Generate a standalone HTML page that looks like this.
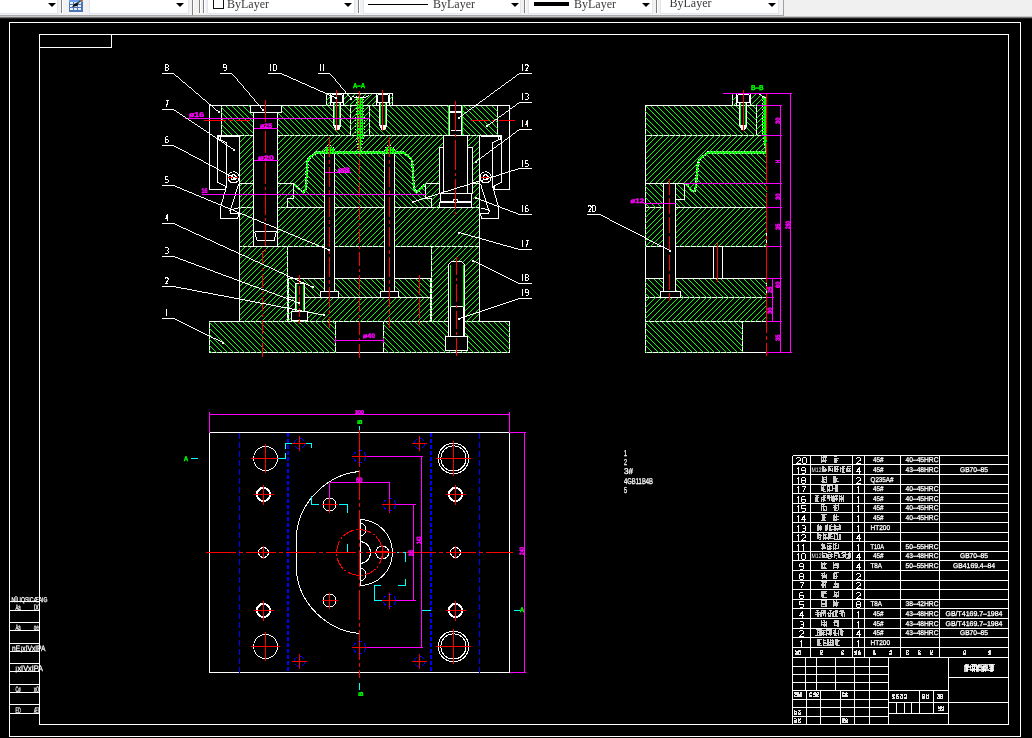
<!DOCTYPE html>
<html><head><meta charset="utf-8"><title>drawing</title>
<style>
html,body{margin:0;padding:0;background:#000;}
body{width:1032px;height:738px;overflow:hidden;position:relative;font-family:"Liberation Sans",sans-serif;}
#tb{position:absolute;left:0;top:0;width:1032px;height:19px;background:linear-gradient(#f0f0f0 0,#f0f0f0 16px,#a0a0a0 17px,#404040 18px,#000 19px);overflow:hidden}
#tb .bar{position:absolute;left:0;top:0;width:783px;height:15px;background:#f2f2f2;border-right:1px solid #a0a0a0;border-bottom:1px solid #a8a8a8}
#tb .cb{position:absolute;top:-3px;height:17px;background:#fff;border:1px solid #dfe6f2;box-sizing:border-box}
#tb .ar{position:absolute;top:3px;width:0;height:0;border-left:4px solid transparent;border-right:4px solid transparent;border-top:4px solid #000}
#tb .sep{position:absolute;top:0;width:1px;height:13px;background:#808080;box-shadow:1px 0 0 #fff}
#tb .chk{position:absolute;top:-3px;width:9px;height:10px;border:1px solid #111;background:#fff}
#tb .t{position:absolute;font-family:"Liberation Serif",serif;font-size:12px;color:#3a3a3a;letter-spacing:0;line-height:14px}
svg#dw{position:absolute;left:0;top:0;will-change:transform}
#tb{will-change:transform}
</style></head>
<body>
<svg id="dw" width="1032" height="738" viewBox="0 0 1032 738" shape-rendering="crispEdges" text-rendering="geometricPrecision">
<rect x="0" y="0" width="1032" height="738" fill="#000"/>
<defs>
<pattern id="gd" width="3" height="3" patternUnits="userSpaceOnUse"><rect width="3" height="3" fill="#00ff00"/><rect x="1" y="1" width="1" height="1" fill="#000"/></pattern>
<mask id="c1" maskUnits="userSpaceOnUse" x="0" y="0" width="1032" height="738"><path d="M209.5,321.5 L335.5,321.5 L335.5,352.5 L209.5,352.5Z" fill-rule="evenodd" fill="#fff" stroke="#fff" stroke-width="1.2"/></mask>
<mask id="c2" maskUnits="userSpaceOnUse" x="0" y="0" width="1032" height="738"><path d="M383.5,321.5 L509.5,321.5 L509.5,352.5 L383.5,352.5Z" fill-rule="evenodd" fill="#fff" stroke="#fff" stroke-width="1.2"/></mask>
<mask id="c3" maskUnits="userSpaceOnUse" x="0" y="0" width="1032" height="738"><path d="M239.5,246.5 L287.5,246.5 L287.5,321.5 L239.5,321.5Z" fill-rule="evenodd" fill="#fff" stroke="#fff" stroke-width="1.2"/></mask>
<mask id="c4" maskUnits="userSpaceOnUse" x="0" y="0" width="1032" height="738"><path d="M431.5,246.5 L479.5,246.5 L479.5,321.5 L431.5,321.5Z" fill-rule="evenodd" fill="#fff" stroke="#fff" stroke-width="1.2"/></mask>
<mask id="c5" maskUnits="userSpaceOnUse" x="0" y="0" width="1032" height="738"><path d="M288.5,278.5 L430.5,278.5 L430.5,297.5 L288.5,297.5Z" fill-rule="evenodd" fill="#fff" stroke="#fff" stroke-width="1.2"/></mask>
<mask id="c6" maskUnits="userSpaceOnUse" x="0" y="0" width="1032" height="738"><path d="M288.5,297.5 L430.5,297.5 L430.5,321.5 L288.5,321.5Z" fill-rule="evenodd" fill="#fff" stroke="#fff" stroke-width="1.2"/></mask>
<mask id="c7" maskUnits="userSpaceOnUse" x="0" y="0" width="1032" height="738"><path d="M239.5,207.5 L479.5,207.5 L479.5,246.5 L239.5,246.5Z" fill-rule="evenodd" fill="#fff" stroke="#fff" stroke-width="1.2"/></mask>
<mask id="c8" maskUnits="userSpaceOnUse" x="0" y="0" width="1032" height="738"><path d="M239.5,183.5 L293.5,183.5 L293.5,198.5 L287.5,198.5 L287.5,207.5 L239.5,207.5Z" fill-rule="evenodd" fill="#fff" stroke="#fff" stroke-width="1.2"/></mask>
<mask id="c9" maskUnits="userSpaceOnUse" x="0" y="0" width="1032" height="738"><path d="M425.5,183.5 L479.5,183.5 L479.5,207.5 L431.5,207.5 L431.5,198.5 L425.5,198.5Z" fill-rule="evenodd" fill="#fff" stroke="#fff" stroke-width="1.2"/></mask>
<mask id="c10" maskUnits="userSpaceOnUse" x="0" y="0" width="1032" height="738"><path d="M293.5,183.5 L293.5,198.5 L287.5,198.5 L287.5,207.5 L431.5,207.5 L431.5,198.5 L425.5,198.5 L425.5,183.5 L425,184.5 L418.2,191 L416.2,192.5 L414.7,190.5 L414,188 L412,161 L409.5,157 L402.5,152.3 L316.5,152.3 L310,157 L307.5,161 L305.8,188 L305,190.5 L303.5,192.5 L301.5,191 L294.7,184.5Z" fill-rule="evenodd" fill="#fff" stroke="#fff" stroke-width="1.2"/></mask>
<mask id="c11" maskUnits="userSpaceOnUse" x="0" y="0" width="1032" height="738"><path d="M239.5,135.5 L479.5,135.5 L479.5,183.5 L425.5,183.5 L425,184.5 L418.2,191 L416.2,192.5 L414.7,190.5 L414,188 L412,161 L409.5,157 L402.5,152.3 L316.5,152.3 L310,157 L307.5,161 L305.8,188 L305,190.5 L303.5,192.5 L301.5,191 L294.7,184.5 L293.5,183.5 L239.5,183.5Z" fill-rule="evenodd" fill="#fff" stroke="#fff" stroke-width="1.2"/></mask>
<mask id="c12" maskUnits="userSpaceOnUse" x="0" y="0" width="1032" height="738"><path d="M221.5,105.5 L497.5,105.5 L497.5,135.5 L221.5,135.5Z" fill-rule="evenodd" fill="#fff" stroke="#fff" stroke-width="1.2"/></mask>
<mask id="c13" maskUnits="userSpaceOnUse" x="0" y="0" width="1032" height="738"><path d="M326.5,93.5 L392.5,93.5 L392.5,105.5 L326.5,105.5Z" fill-rule="evenodd" fill="#fff" stroke="#fff" stroke-width="1.2"/></mask>
<mask id="c14" maskUnits="userSpaceOnUse" x="0" y="0" width="1032" height="738"><path d="M350.5,105.5 L369.5,105.5 L369.5,135.5 L350.5,135.5Z" fill-rule="evenodd" fill="#fff" stroke="#fff" stroke-width="1.2"/></mask>
<mask id="c15" maskUnits="userSpaceOnUse" x="0" y="0" width="1032" height="738"><path d="M645.5,321.5 L742.5,321.5 L742.5,352.5 L645.5,352.5Z" fill-rule="evenodd" fill="#fff" stroke="#fff" stroke-width="1.2"/></mask>
<mask id="c16" maskUnits="userSpaceOnUse" x="0" y="0" width="1032" height="738"><path d="M645.5,297.5 L766.5,297.5 L766.5,321.5 L645.5,321.5Z" fill-rule="evenodd" fill="#fff" stroke="#fff" stroke-width="1.2"/></mask>
<mask id="c17" maskUnits="userSpaceOnUse" x="0" y="0" width="1032" height="738"><path d="M645.5,278.5 L766.5,278.5 L766.5,297.5 L645.5,297.5Z" fill-rule="evenodd" fill="#fff" stroke="#fff" stroke-width="1.2"/></mask>
<mask id="c18" maskUnits="userSpaceOnUse" x="0" y="0" width="1032" height="738"><path d="M645.5,207.5 L766.5,207.5 L766.5,246.5 L645.5,246.5Z" fill-rule="evenodd" fill="#fff" stroke="#fff" stroke-width="1.2"/></mask>
<mask id="c19" maskUnits="userSpaceOnUse" x="0" y="0" width="1032" height="738"><path d="M645.5,183.5 L684.5,183.5 L684.5,199.5 L675.5,199.5 L675.5,207.5 L645.5,207.5Z" fill-rule="evenodd" fill="#fff" stroke="#fff" stroke-width="1.2"/></mask>
<mask id="c20" maskUnits="userSpaceOnUse" x="0" y="0" width="1032" height="738"><path d="M675.5,207.5 L675.5,199.5 L684.5,199.5 L684.5,183.5 L686.5,184.5 L691.5,190.5 L693.5,192 L695,190 L695.8,186 L698,162 L700.5,158 L708.5,152.3 L766.5,152.3 L766.5,207.5Z" fill-rule="evenodd" fill="#fff" stroke="#fff" stroke-width="1.2"/></mask>
<mask id="c21" maskUnits="userSpaceOnUse" x="0" y="0" width="1032" height="738"><path d="M645.5,135.5 L766.5,135.5 L766.5,152.3 L708.5,152.3 L700.5,158 L698,162 L695.8,186 L695,190 L693.5,192 L691.5,190.5 L686.5,184.5 L684.5,183.5 L645.5,183.5Z" fill-rule="evenodd" fill="#fff" stroke="#fff" stroke-width="1.2"/></mask>
<mask id="c22" maskUnits="userSpaceOnUse" x="0" y="0" width="1032" height="738"><path d="M645.5,105.5 L766.5,105.5 L766.5,135.5 L645.5,135.5Z" fill-rule="evenodd" fill="#fff" stroke="#fff" stroke-width="1.2"/></mask>
<mask id="c23" maskUnits="userSpaceOnUse" x="0" y="0" width="1032" height="738"><path d="M732.5,93.5 L758,93.5 L764,97 L766.5,97 L766.5,105.5 L732.5,105.5Z" fill-rule="evenodd" fill="#fff" stroke="#fff" stroke-width="1.2"/></mask>
<mask id="c24" maskUnits="userSpaceOnUse" x="0" y="0" width="1032" height="738"><path d="M756.5,105.5 L766.5,105.5 L766.5,135.5 L756.5,135.5Z" fill-rule="evenodd" fill="#fff" stroke="#fff" stroke-width="1.2"/></mask>
</defs>
<rect x="9.5" y="22.5" width="1011" height="714" fill="none" stroke="#ffffff" stroke-width="1"/>
<rect x="39.5" y="34.5" width="969" height="690" fill="none" stroke="#ffffff" stroke-width="1"/>
<rect x="39.5" y="34.5" width="72" height="13" fill="none" stroke="#ffffff" stroke-width="1"/>
<line x1="9.5" y1="601.5" x2="39.5" y2="601.5" stroke="#ffffff" stroke-width="1"/>
<line x1="9.5" y1="610.5" x2="39.5" y2="610.5" stroke="#ffffff" stroke-width="1"/>
<line x1="9.5" y1="622.5" x2="39.5" y2="622.5" stroke="#ffffff" stroke-width="1"/>
<line x1="9.5" y1="630.5" x2="39.5" y2="630.5" stroke="#ffffff" stroke-width="1"/>
<line x1="9.5" y1="643.5" x2="39.5" y2="643.5" stroke="#ffffff" stroke-width="1"/>
<line x1="9.5" y1="651.5" x2="39.5" y2="651.5" stroke="#ffffff" stroke-width="1"/>
<line x1="9.5" y1="663.5" x2="39.5" y2="663.5" stroke="#ffffff" stroke-width="1"/>
<line x1="9.5" y1="671.5" x2="39.5" y2="671.5" stroke="#ffffff" stroke-width="1"/>
<line x1="9.5" y1="684.5" x2="39.5" y2="684.5" stroke="#ffffff" stroke-width="1"/>
<line x1="9.5" y1="692.5" x2="39.5" y2="692.5" stroke="#ffffff" stroke-width="1"/>
<line x1="9.5" y1="704.5" x2="39.5" y2="704.5" stroke="#ffffff" stroke-width="1"/>
<line x1="9.5" y1="713.5" x2="39.5" y2="713.5" stroke="#ffffff" stroke-width="1"/>
<text x="11.5" y="601.5" font-family="Liberation Sans" font-size="7" fill="#ffffff" text-anchor="start" textLength="36" lengthAdjust="spacingAndGlyphs" stroke="#fff" stroke-width="0.25">NÏI IQSICÆAIG</text>
<text x="15.5" y="609.5" font-family="Liberation Sans" font-size="8" fill="#ffffff" text-anchor="start" textLength="5.2" lengthAdjust="spacingAndGlyphs" stroke="#fff" stroke-width="0.25">Aa</text>
<text x="33.8" y="609.5" font-family="Liberation Sans" font-size="8" fill="#ffffff" text-anchor="start" textLength="5" lengthAdjust="spacingAndGlyphs" stroke="#fff" stroke-width="0.25">IX</text>
<text x="15.5" y="629.5" font-family="Liberation Sans" font-size="8" fill="#ffffff" text-anchor="start" textLength="5.2" lengthAdjust="spacingAndGlyphs" stroke="#fff" stroke-width="0.25">Aa</text>
<text x="33.8" y="629.5" font-family="Liberation Sans" font-size="8" fill="#ffffff" text-anchor="start" textLength="5" lengthAdjust="spacingAndGlyphs" stroke="#fff" stroke-width="0.25">oe</text>
<text x="15.5" y="692" font-family="Liberation Sans" font-size="8" fill="#ffffff" text-anchor="start" textLength="5.2" lengthAdjust="spacingAndGlyphs" stroke="#fff" stroke-width="0.25">Cø</text>
<text x="33.8" y="692" font-family="Liberation Sans" font-size="8" fill="#ffffff" text-anchor="start" textLength="5" lengthAdjust="spacingAndGlyphs" stroke="#fff" stroke-width="0.25">x0</text>
<text x="15.5" y="712.5" font-family="Liberation Sans" font-size="8" fill="#ffffff" text-anchor="start" textLength="5.2" lengthAdjust="spacingAndGlyphs" stroke="#fff" stroke-width="0.25">ED</text>
<text x="33.8" y="712.5" font-family="Liberation Sans" font-size="8" fill="#ffffff" text-anchor="start" textLength="5" lengthAdjust="spacingAndGlyphs" stroke="#fff" stroke-width="0.25">Æl</text>
<text x="12" y="651" font-family="Liberation Sans" font-size="8" fill="#ffffff" text-anchor="start" textLength="33.5" lengthAdjust="spacingAndGlyphs" stroke="#fff" stroke-width="0.25">nE¡xIVxIPA</text>
<text x="15" y="671" font-family="Liberation Sans" font-size="8" fill="#ffffff" text-anchor="start" textLength="28" lengthAdjust="spacingAndGlyphs" stroke="#fff" stroke-width="0.25">¡xIVxIPA</text>
<path d="M209.5,321.5L335.5,321.5M335.5,321.5L335.5,352.5M335.5,352.5L209.5,352.5M209.5,352.5L209.5,321.5" fill="none" stroke="#ffffff" stroke-width="1" stroke-linecap="square"/>
<path d="M173.84,321.5L174.84,321.5L205.84,352.5L204.84,352.5ZM179.5,321.5L180.5,321.5L211.5,352.5L210.5,352.5ZM185.16,321.5L186.16,321.5L217.16,352.5L216.16,352.5ZM190.82,321.5L191.82,321.5L222.82,352.5L221.82,352.5ZM196.48,321.5L197.48,321.5L228.48,352.5L227.48,352.5ZM202.14,321.5L203.14,321.5L234.14,352.5L233.14,352.5ZM207.8,321.5L208.8,321.5L239.8,352.5L238.8,352.5ZM213.46,321.5L214.46,321.5L245.46,352.5L244.46,352.5ZM219.12,321.5L220.12,321.5L251.12,352.5L250.12,352.5ZM224.78,321.5L225.78,321.5L256.78,352.5L255.78,352.5ZM230.44,321.5L231.44,321.5L262.44,352.5L261.44,352.5ZM236.1,321.5L237.1,321.5L268.1,352.5L267.1,352.5ZM242.26,321L242.26,322L273.26,353L273.26,352ZM247.42,321.5L248.42,321.5L279.42,352.5L278.42,352.5ZM253.08,321.5L254.08,321.5L285.08,352.5L284.08,352.5ZM258.74,321.5L259.74,321.5L290.74,352.5L289.74,352.5ZM264.4,321.5L265.4,321.5L296.4,352.5L295.4,352.5ZM270.06,321.5L271.06,321.5L302.06,352.5L301.06,352.5ZM275.72,321.5L276.72,321.5L307.72,352.5L306.72,352.5ZM281.38,321.5L282.38,321.5L313.38,352.5L312.38,352.5ZM287.04,321.5L288.04,321.5L319.04,352.5L318.04,352.5ZM292.7,321.5L293.7,321.5L324.7,352.5L323.7,352.5ZM298.36,321.5L299.36,321.5L330.36,352.5L329.36,352.5ZM304.02,321.5L305.02,321.5L336.02,352.5L335.02,352.5ZM309.68,321.5L310.68,321.5L341.68,352.5L340.68,352.5ZM315.34,321.5L316.34,321.5L347.34,352.5L346.34,352.5ZM321,321.5L322,321.5L353,352.5L352,352.5ZM326.66,321.5L327.66,321.5L358.66,352.5L357.66,352.5ZM332.32,321.5L333.32,321.5L364.32,352.5L363.32,352.5Z" fill="#00ff00" mask="url(#c1)"/>
<path d="M383.5,321.5L509.5,321.5M509.5,321.5L509.5,352.5M509.5,352.5L383.5,352.5M383.5,352.5L383.5,321.5" fill="none" stroke="#ffffff" stroke-width="1" stroke-linecap="square"/>
<path d="M351.3,321.5L352.3,321.5L383.3,352.5L382.3,352.5ZM356.96,321.5L357.96,321.5L388.96,352.5L387.96,352.5ZM362.62,321.5L363.62,321.5L394.62,352.5L393.62,352.5ZM368.28,321.5L369.28,321.5L400.28,352.5L399.28,352.5ZM373.94,321.5L374.94,321.5L405.94,352.5L404.94,352.5ZM379.6,321.5L380.6,321.5L411.6,352.5L410.6,352.5ZM385.26,321.5L386.26,321.5L417.26,352.5L416.26,352.5ZM390.92,321.5L391.92,321.5L422.92,352.5L421.92,352.5ZM396.58,321.5L397.58,321.5L428.58,352.5L427.58,352.5ZM402.24,321.5L403.24,321.5L434.24,352.5L433.24,352.5ZM407.9,321.5L408.9,321.5L439.9,352.5L438.9,352.5ZM413.56,321.5L414.56,321.5L445.56,352.5L444.56,352.5ZM419.22,321.5L420.22,321.5L451.22,352.5L450.22,352.5ZM424.88,321.5L425.88,321.5L456.88,352.5L455.88,352.5ZM430.54,321.5L431.54,321.5L462.54,352.5L461.54,352.5ZM436.2,321.5L437.2,321.5L468.2,352.5L467.2,352.5ZM441.86,321.5L442.86,321.5L473.86,352.5L472.86,352.5ZM447.52,321.5L448.52,321.5L479.52,352.5L478.52,352.5ZM453.18,321.5L454.18,321.5L485.18,352.5L484.18,352.5ZM458.84,321.5L459.84,321.5L490.84,352.5L489.84,352.5ZM464.5,321.5L465.5,321.5L496.5,352.5L495.5,352.5ZM470.16,321.5L471.16,321.5L502.16,352.5L501.16,352.5ZM475.82,321.5L476.82,321.5L507.82,352.5L506.82,352.5ZM481.48,321.5L482.48,321.5L513.48,352.5L512.48,352.5ZM487.14,321.5L488.14,321.5L519.14,352.5L518.14,352.5ZM492.8,321.5L493.8,321.5L524.8,352.5L523.8,352.5ZM498.46,321.5L499.46,321.5L530.46,352.5L529.46,352.5ZM504.12,321.5L505.12,321.5L536.12,352.5L535.12,352.5Z" fill="#00ff00" mask="url(#c2)"/>
<line x1="335.5" y1="321.5" x2="383.5" y2="321.5" stroke="#ffffff" stroke-width="1"/>
<line x1="335.5" y1="352.5" x2="383.5" y2="352.5" stroke="#ffffff" stroke-width="1"/>
<path d="M239.5,246.5L287.5,246.5M287.5,246.5L287.5,321.5M287.5,321.5L239.5,321.5M239.5,321.5L239.5,246.5" fill="none" stroke="#ffffff" stroke-width="1" stroke-linecap="square"/>
<path d="M159.1,321.5L160.1,321.5L235.1,246.5L234.1,246.5ZM164.76,321.5L165.76,321.5L240.76,246.5L239.76,246.5ZM170.42,321.5L171.42,321.5L246.42,246.5L245.42,246.5ZM176.08,321.5L177.08,321.5L252.08,246.5L251.08,246.5ZM181.74,321.5L182.74,321.5L257.74,246.5L256.74,246.5ZM187.4,321.5L188.4,321.5L263.4,246.5L262.4,246.5ZM193.06,321.5L194.06,321.5L269.06,246.5L268.06,246.5ZM198.72,321.5L199.72,321.5L274.72,246.5L273.72,246.5ZM204.38,321.5L205.38,321.5L280.38,246.5L279.38,246.5ZM210.04,321.5L211.04,321.5L286.04,246.5L285.04,246.5ZM215.7,321.5L216.7,321.5L291.7,246.5L290.7,246.5ZM221.36,321.5L222.36,321.5L297.36,246.5L296.36,246.5ZM227.02,321.5L228.02,321.5L303.02,246.5L302.02,246.5ZM232.68,321.5L233.68,321.5L308.68,246.5L307.68,246.5ZM238.34,321.5L239.34,321.5L314.34,246.5L313.34,246.5ZM244,321.5L245,321.5L320,246.5L319,246.5ZM249.66,321.5L250.66,321.5L325.66,246.5L324.66,246.5ZM255.32,321.5L256.32,321.5L331.32,246.5L330.32,246.5ZM260.98,321.5L261.98,321.5L336.98,246.5L335.98,246.5ZM266.64,321.5L267.64,321.5L342.64,246.5L341.64,246.5ZM272.3,321.5L273.3,321.5L348.3,246.5L347.3,246.5ZM277.96,321.5L278.96,321.5L353.96,246.5L352.96,246.5ZM283.62,321.5L284.62,321.5L359.62,246.5L358.62,246.5Z" fill="#00ff00" mask="url(#c3)"/>
<path d="M431.5,246.5L479.5,246.5M479.5,246.5L479.5,321.5M479.5,321.5L431.5,321.5M431.5,321.5L431.5,246.5" fill="none" stroke="#ffffff" stroke-width="1" stroke-linecap="square"/>
<path d="M352.54,321.5L353.54,321.5L428.54,246.5L427.54,246.5ZM358.2,321.5L359.2,321.5L434.2,246.5L433.2,246.5ZM363.86,321.5L364.86,321.5L439.86,246.5L438.86,246.5ZM369.52,321.5L370.52,321.5L445.52,246.5L444.52,246.5ZM375.18,321.5L376.18,321.5L451.18,246.5L450.18,246.5ZM380.84,321.5L381.84,321.5L456.84,246.5L455.84,246.5ZM386.5,321.5L387.5,321.5L462.5,246.5L461.5,246.5ZM392.16,321.5L393.16,321.5L468.16,246.5L467.16,246.5ZM397.82,321.5L398.82,321.5L473.82,246.5L472.82,246.5ZM403.48,321.5L404.48,321.5L479.48,246.5L478.48,246.5ZM409.14,321.5L410.14,321.5L485.14,246.5L484.14,246.5ZM414.8,321.5L415.8,321.5L490.8,246.5L489.8,246.5ZM420.46,321.5L421.46,321.5L496.46,246.5L495.46,246.5ZM426.12,321.5L427.12,321.5L502.12,246.5L501.12,246.5ZM431.78,321.5L432.78,321.5L507.78,246.5L506.78,246.5ZM437.44,321.5L438.44,321.5L513.44,246.5L512.44,246.5ZM443.1,321.5L444.1,321.5L519.1,246.5L518.1,246.5ZM448.76,321.5L449.76,321.5L524.76,246.5L523.76,246.5ZM454.42,321.5L455.42,321.5L530.42,246.5L529.42,246.5ZM460.08,321.5L461.08,321.5L536.08,246.5L535.08,246.5ZM465.74,321.5L466.74,321.5L541.74,246.5L540.74,246.5ZM471.4,321.5L472.4,321.5L547.4,246.5L546.4,246.5ZM477.06,321.5L478.06,321.5L553.06,246.5L552.06,246.5Z" fill="#00ff00" mask="url(#c4)"/>
<path d="M288.5,278.5L430.5,278.5M430.5,278.5L430.5,297.5M430.5,297.5L288.5,297.5M288.5,297.5L288.5,278.5" fill="none" stroke="#ffffff" stroke-width="1" stroke-linecap="square"/>
<path d="M267.68,278.5L268.68,278.5L287.68,297.5L286.68,297.5ZM273.34,278.5L274.34,278.5L293.34,297.5L292.34,297.5ZM279,278.5L280,278.5L299,297.5L298,297.5ZM284.66,278.5L285.66,278.5L304.66,297.5L303.66,297.5ZM290.32,278.5L291.32,278.5L310.32,297.5L309.32,297.5ZM295.98,278.5L296.98,278.5L315.98,297.5L314.98,297.5ZM301.64,278.5L302.64,278.5L321.64,297.5L320.64,297.5ZM307.3,278.5L308.3,278.5L327.3,297.5L326.3,297.5ZM312.96,278.5L313.96,278.5L332.96,297.5L331.96,297.5ZM318.62,278.5L319.62,278.5L338.62,297.5L337.62,297.5ZM324.28,278.5L325.28,278.5L344.28,297.5L343.28,297.5ZM329.94,278.5L330.94,278.5L349.94,297.5L348.94,297.5ZM335.6,278.5L336.6,278.5L355.6,297.5L354.6,297.5ZM341.26,278.5L342.26,278.5L361.26,297.5L360.26,297.5ZM346.92,278.5L347.92,278.5L366.92,297.5L365.92,297.5ZM352.58,278.5L353.58,278.5L372.58,297.5L371.58,297.5ZM358.24,278.5L359.24,278.5L378.24,297.5L377.24,297.5ZM363.9,278.5L364.9,278.5L383.9,297.5L382.9,297.5ZM369.56,278.5L370.56,278.5L389.56,297.5L388.56,297.5ZM375.22,278.5L376.22,278.5L395.22,297.5L394.22,297.5ZM380.88,278.5L381.88,278.5L400.88,297.5L399.88,297.5ZM386.54,278.5L387.54,278.5L406.54,297.5L405.54,297.5ZM392.2,278.5L393.2,278.5L412.2,297.5L411.2,297.5ZM397.86,278.5L398.86,278.5L417.86,297.5L416.86,297.5ZM403.52,278.5L404.52,278.5L423.52,297.5L422.52,297.5ZM409.18,278.5L410.18,278.5L429.18,297.5L428.18,297.5ZM414.84,278.5L415.84,278.5L434.84,297.5L433.84,297.5ZM420.5,278.5L421.5,278.5L440.5,297.5L439.5,297.5ZM426.16,278.5L427.16,278.5L446.16,297.5L445.16,297.5Z" fill="#00ff00" mask="url(#c5)"/>
<path d="M288.5,297.5L430.5,297.5M430.5,297.5L430.5,321.5M430.5,321.5L288.5,321.5M288.5,321.5L288.5,297.5" fill="none" stroke="#ffffff" stroke-width="1" stroke-linecap="square"/>
<path d="M263.98,321.5L264.98,321.5L288.98,297.5L287.98,297.5ZM269.64,321.5L270.64,321.5L294.64,297.5L293.64,297.5ZM275.3,321.5L276.3,321.5L300.3,297.5L299.3,297.5ZM280.96,321.5L281.96,321.5L305.96,297.5L304.96,297.5ZM286.62,321.5L287.62,321.5L311.62,297.5L310.62,297.5ZM292.28,321.5L293.28,321.5L317.28,297.5L316.28,297.5ZM297.94,321.5L298.94,321.5L322.94,297.5L321.94,297.5ZM303.6,321.5L304.6,321.5L328.6,297.5L327.6,297.5ZM309.26,321.5L310.26,321.5L334.26,297.5L333.26,297.5ZM314.92,321.5L315.92,321.5L339.92,297.5L338.92,297.5ZM320.58,321.5L321.58,321.5L345.58,297.5L344.58,297.5ZM326.24,321.5L327.24,321.5L351.24,297.5L350.24,297.5ZM331.9,321.5L332.9,321.5L356.9,297.5L355.9,297.5ZM337.56,321.5L338.56,321.5L362.56,297.5L361.56,297.5ZM343.22,321.5L344.22,321.5L368.22,297.5L367.22,297.5ZM348.88,321.5L349.88,321.5L373.88,297.5L372.88,297.5ZM354.54,321.5L355.54,321.5L379.54,297.5L378.54,297.5ZM360.2,321.5L361.2,321.5L385.2,297.5L384.2,297.5ZM365.86,321.5L366.86,321.5L390.86,297.5L389.86,297.5ZM371.52,321.5L372.52,321.5L396.52,297.5L395.52,297.5ZM377.18,321.5L378.18,321.5L402.18,297.5L401.18,297.5ZM382.84,321.5L383.84,321.5L407.84,297.5L406.84,297.5ZM388.5,321.5L389.5,321.5L413.5,297.5L412.5,297.5ZM394.16,321.5L395.16,321.5L419.16,297.5L418.16,297.5ZM399.82,321.5L400.82,321.5L424.82,297.5L423.82,297.5ZM405.48,321.5L406.48,321.5L430.48,297.5L429.48,297.5ZM411.14,321.5L412.14,321.5L436.14,297.5L435.14,297.5ZM416.8,321.5L417.8,321.5L441.8,297.5L440.8,297.5ZM422.46,321.5L423.46,321.5L447.46,297.5L446.46,297.5ZM428.12,321.5L429.12,321.5L453.12,297.5L452.12,297.5Z" fill="#00ff00" mask="url(#c6)"/>
<path d="M239.5,207.5L479.5,207.5M479.5,207.5L479.5,246.5M479.5,246.5L239.5,246.5M239.5,246.5L239.5,207.5" fill="none" stroke="#ffffff" stroke-width="1" stroke-linecap="square"/>
<path d="M196.48,246.5L197.48,246.5L236.48,207.5L235.48,207.5ZM202.14,246.5L203.14,246.5L242.14,207.5L241.14,207.5ZM207.8,246.5L208.8,246.5L247.8,207.5L246.8,207.5ZM213.46,246.5L214.46,246.5L253.46,207.5L252.46,207.5ZM219.12,246.5L220.12,246.5L259.12,207.5L258.12,207.5ZM224.78,246.5L225.78,246.5L264.78,207.5L263.78,207.5ZM230.44,246.5L231.44,246.5L270.44,207.5L269.44,207.5ZM236.1,246.5L237.1,246.5L276.1,207.5L275.1,207.5ZM241.76,246.5L242.76,246.5L281.76,207.5L280.76,207.5ZM247.42,246.5L248.42,246.5L287.42,207.5L286.42,207.5ZM253.08,246.5L254.08,246.5L293.08,207.5L292.08,207.5ZM258.74,246.5L259.74,246.5L298.74,207.5L297.74,207.5ZM264.4,246.5L265.4,246.5L304.4,207.5L303.4,207.5ZM270.06,246.5L271.06,246.5L310.06,207.5L309.06,207.5ZM275.72,246.5L276.72,246.5L315.72,207.5L314.72,207.5ZM281.38,246.5L282.38,246.5L321.38,207.5L320.38,207.5ZM287.04,246.5L288.04,246.5L327.04,207.5L326.04,207.5ZM292.7,246.5L293.7,246.5L332.7,207.5L331.7,207.5ZM298.36,246.5L299.36,246.5L338.36,207.5L337.36,207.5ZM304.02,246.5L305.02,246.5L344.02,207.5L343.02,207.5ZM309.68,246.5L310.68,246.5L349.68,207.5L348.68,207.5ZM315.34,246.5L316.34,246.5L355.34,207.5L354.34,207.5ZM321,246.5L322,246.5L361,207.5L360,207.5ZM326.66,246.5L327.66,246.5L366.66,207.5L365.66,207.5ZM332.32,246.5L333.32,246.5L372.32,207.5L371.32,207.5ZM337.98,246.5L338.98,246.5L377.98,207.5L376.98,207.5ZM343.64,246.5L344.64,246.5L383.64,207.5L382.64,207.5ZM349.3,246.5L350.3,246.5L389.3,207.5L388.3,207.5ZM354.96,246.5L355.96,246.5L394.96,207.5L393.96,207.5ZM360.62,246.5L361.62,246.5L400.62,207.5L399.62,207.5ZM366.28,246.5L367.28,246.5L406.28,207.5L405.28,207.5ZM371.94,246.5L372.94,246.5L411.94,207.5L410.94,207.5ZM377.6,246.5L378.6,246.5L417.6,207.5L416.6,207.5ZM383.26,246.5L384.26,246.5L423.26,207.5L422.26,207.5ZM388.92,246.5L389.92,246.5L428.92,207.5L427.92,207.5ZM394.58,246.5L395.58,246.5L434.58,207.5L433.58,207.5ZM400.24,246.5L401.24,246.5L440.24,207.5L439.24,207.5ZM405.9,246.5L406.9,246.5L445.9,207.5L444.9,207.5ZM411.56,246.5L412.56,246.5L451.56,207.5L450.56,207.5ZM417.22,246.5L418.22,246.5L457.22,207.5L456.22,207.5ZM422.88,246.5L423.88,246.5L462.88,207.5L461.88,207.5ZM428.54,246.5L429.54,246.5L468.54,207.5L467.54,207.5ZM434.2,246.5L435.2,246.5L474.2,207.5L473.2,207.5ZM439.86,246.5L440.86,246.5L479.86,207.5L478.86,207.5ZM445.52,246.5L446.52,246.5L485.52,207.5L484.52,207.5ZM451.18,246.5L452.18,246.5L491.18,207.5L490.18,207.5ZM456.84,246.5L457.84,246.5L496.84,207.5L495.84,207.5ZM462.5,246.5L463.5,246.5L502.5,207.5L501.5,207.5ZM468.16,246.5L469.16,246.5L508.16,207.5L507.16,207.5ZM473.82,246.5L474.82,246.5L513.82,207.5L512.82,207.5Z" fill="#00ff00" mask="url(#c7)"/>
<path d="M239.5,183.5L293.5,183.5M293.5,183.5L293.5,198.5M293.5,198.5L287.5,198.5M287.5,198.5L287.5,207.5M287.5,207.5L239.5,207.5M239.5,207.5L239.5,183.5" fill="none" stroke="#ffffff" stroke-width="1" stroke-linecap="square"/>
<path d="M211.84,207.5L212.84,207.5L236.84,183.5L235.84,183.5ZM217.5,207.5L218.5,207.5L242.5,183.5L241.5,183.5ZM223.16,207.5L224.16,207.5L248.16,183.5L247.16,183.5ZM228.82,207.5L229.82,207.5L253.82,183.5L252.82,183.5ZM234.48,207.5L235.48,207.5L259.48,183.5L258.48,183.5ZM240.14,207.5L241.14,207.5L265.14,183.5L264.14,183.5ZM245.8,207.5L246.8,207.5L270.8,183.5L269.8,183.5ZM251.46,207.5L252.46,207.5L276.46,183.5L275.46,183.5ZM257.12,207.5L258.12,207.5L282.12,183.5L281.12,183.5ZM262.78,207.5L263.78,207.5L287.78,183.5L286.78,183.5ZM268.44,207.5L269.44,207.5L293.44,183.5L292.44,183.5ZM274.1,207.5L275.1,207.5L299.1,183.5L298.1,183.5ZM279.76,207.5L280.76,207.5L304.76,183.5L303.76,183.5ZM285.42,207.5L286.42,207.5L310.42,183.5L309.42,183.5ZM291.08,207.5L292.08,207.5L316.08,183.5L315.08,183.5Z" fill="#00ff00" mask="url(#c8)"/>
<path d="M425.5,183.5L479.5,183.5M479.5,183.5L479.5,207.5M479.5,207.5L431.5,207.5M431.5,207.5L431.5,198.5M431.5,198.5L425.5,198.5M425.5,198.5L425.5,183.5" fill="none" stroke="#ffffff" stroke-width="1" stroke-linecap="square"/>
<path d="M401.62,207.5L402.62,207.5L426.62,183.5L425.62,183.5ZM407.28,207.5L408.28,207.5L432.28,183.5L431.28,183.5ZM412.94,207.5L413.94,207.5L437.94,183.5L436.94,183.5ZM418.6,207.5L419.6,207.5L443.6,183.5L442.6,183.5ZM424.26,207.5L425.26,207.5L449.26,183.5L448.26,183.5ZM429.92,207.5L430.92,207.5L454.92,183.5L453.92,183.5ZM435.58,207.5L436.58,207.5L460.58,183.5L459.58,183.5ZM441.24,207.5L442.24,207.5L466.24,183.5L465.24,183.5ZM446.9,207.5L447.9,207.5L471.9,183.5L470.9,183.5ZM452.56,207.5L453.56,207.5L477.56,183.5L476.56,183.5ZM458.22,207.5L459.22,207.5L483.22,183.5L482.22,183.5ZM463.88,207.5L464.88,207.5L488.88,183.5L487.88,183.5ZM469.54,207.5L470.54,207.5L494.54,183.5L493.54,183.5ZM475.2,207.5L476.2,207.5L500.2,183.5L499.2,183.5Z" fill="#00ff00" mask="url(#c9)"/>
<path d="M233.04,152.3L234.04,152.3L289.24,207.5L288.24,207.5ZM238.7,152.3L239.7,152.3L294.9,207.5L293.9,207.5ZM244.36,152.3L245.36,152.3L300.56,207.5L299.56,207.5ZM250.52,151.8L250.52,152.8L305.72,208L305.72,207ZM255.68,152.3L256.68,152.3L311.88,207.5L310.88,207.5ZM261.34,152.3L262.34,152.3L317.54,207.5L316.54,207.5ZM267,152.3L268,152.3L323.2,207.5L322.2,207.5ZM273.16,151.8L273.16,152.8L328.36,208L328.36,207ZM278.32,152.3L279.32,152.3L334.52,207.5L333.52,207.5ZM283.98,152.3L284.98,152.3L340.18,207.5L339.18,207.5ZM289.64,152.3L290.64,152.3L345.84,207.5L344.84,207.5ZM295.8,151.8L295.8,152.8L351,208L351,207ZM300.96,152.3L301.96,152.3L357.16,207.5L356.16,207.5ZM306.62,152.3L307.62,152.3L362.82,207.5L361.82,207.5ZM312.28,152.3L313.28,152.3L368.48,207.5L367.48,207.5ZM318.44,151.8L318.44,152.8L373.64,208L373.64,207ZM323.6,152.3L324.6,152.3L379.8,207.5L378.8,207.5ZM329.26,152.3L330.26,152.3L385.46,207.5L384.46,207.5ZM334.92,152.3L335.92,152.3L391.12,207.5L390.12,207.5ZM341.08,151.8L341.08,152.8L396.28,208L396.28,207ZM346.24,152.3L347.24,152.3L402.44,207.5L401.44,207.5ZM351.9,152.3L352.9,152.3L408.1,207.5L407.1,207.5ZM357.56,152.3L358.56,152.3L413.76,207.5L412.76,207.5ZM363.72,151.8L363.72,152.8L418.92,208L418.92,207ZM368.88,152.3L369.88,152.3L425.08,207.5L424.08,207.5ZM374.54,152.3L375.54,152.3L430.74,207.5L429.74,207.5ZM380.2,152.3L381.2,152.3L436.4,207.5L435.4,207.5ZM386.36,151.8L386.36,152.8L441.56,208L441.56,207ZM391.52,152.3L392.52,152.3L447.72,207.5L446.72,207.5ZM397.18,152.3L398.18,152.3L453.38,207.5L452.38,207.5ZM402.84,152.3L403.84,152.3L459.04,207.5L458.04,207.5ZM408.5,152.3L409.5,152.3L464.7,207.5L463.7,207.5ZM414.16,152.3L415.16,152.3L470.36,207.5L469.36,207.5ZM419.82,152.3L420.82,152.3L476.02,207.5L475.02,207.5ZM425.48,152.3L426.48,152.3L481.68,207.5L480.68,207.5Z" fill="#00ff00" mask="url(#c10)"/>
<line x1="287.5" y1="198.5" x2="293.5" y2="198.5" stroke="#ffffff" stroke-width="1"/>
<line x1="293.5" y1="183.5" x2="293.5" y2="198.5" stroke="#ffffff" stroke-width="1"/>
<line x1="287.5" y1="198.5" x2="287.5" y2="207.5" stroke="#ffffff" stroke-width="1"/>
<line x1="425.5" y1="198.5" x2="431.5" y2="198.5" stroke="#ffffff" stroke-width="1"/>
<line x1="425.5" y1="183.5" x2="425.5" y2="198.5" stroke="#ffffff" stroke-width="1"/>
<line x1="431.5" y1="198.5" x2="431.5" y2="207.5" stroke="#ffffff" stroke-width="1"/>
<line x1="287.5" y1="207.5" x2="431.5" y2="207.5" stroke="#ffffff" stroke-width="1"/>
<path d="M183.56,192.5L184.56,192.5L241.56,135.5L240.56,135.5ZM189.22,192.5L190.22,192.5L247.22,135.5L246.22,135.5ZM194.88,192.5L195.88,192.5L252.88,135.5L251.88,135.5ZM200.54,192.5L201.54,192.5L258.54,135.5L257.54,135.5ZM206.2,192.5L207.2,192.5L264.2,135.5L263.2,135.5ZM211.86,192.5L212.86,192.5L269.86,135.5L268.86,135.5ZM217.52,192.5L218.52,192.5L275.52,135.5L274.52,135.5ZM223.18,192.5L224.18,192.5L281.18,135.5L280.18,135.5ZM228.84,192.5L229.84,192.5L286.84,135.5L285.84,135.5ZM234.5,192.5L235.5,192.5L292.5,135.5L291.5,135.5ZM240.16,192.5L241.16,192.5L298.16,135.5L297.16,135.5ZM245.82,192.5L246.82,192.5L303.82,135.5L302.82,135.5ZM251.48,192.5L252.48,192.5L309.48,135.5L308.48,135.5ZM257.14,192.5L258.14,192.5L315.14,135.5L314.14,135.5ZM262.8,192.5L263.8,192.5L320.8,135.5L319.8,135.5ZM268.46,192.5L269.46,192.5L326.46,135.5L325.46,135.5ZM274.12,192.5L275.12,192.5L332.12,135.5L331.12,135.5ZM279.78,192.5L280.78,192.5L337.78,135.5L336.78,135.5ZM285.44,192.5L286.44,192.5L343.44,135.5L342.44,135.5ZM291.1,192.5L292.1,192.5L349.1,135.5L348.1,135.5ZM296.76,192.5L297.76,192.5L354.76,135.5L353.76,135.5ZM302.42,192.5L303.42,192.5L360.42,135.5L359.42,135.5ZM308.08,192.5L309.08,192.5L366.08,135.5L365.08,135.5ZM313.74,192.5L314.74,192.5L371.74,135.5L370.74,135.5ZM319.4,192.5L320.4,192.5L377.4,135.5L376.4,135.5ZM325.06,192.5L326.06,192.5L383.06,135.5L382.06,135.5ZM330.72,192.5L331.72,192.5L388.72,135.5L387.72,135.5ZM336.38,192.5L337.38,192.5L394.38,135.5L393.38,135.5ZM342.04,192.5L343.04,192.5L400.04,135.5L399.04,135.5ZM347.7,192.5L348.7,192.5L405.7,135.5L404.7,135.5ZM353.36,192.5L354.36,192.5L411.36,135.5L410.36,135.5ZM359.02,192.5L360.02,192.5L417.02,135.5L416.02,135.5ZM364.68,192.5L365.68,192.5L422.68,135.5L421.68,135.5ZM370.34,192.5L371.34,192.5L428.34,135.5L427.34,135.5ZM376,192.5L377,192.5L434,135.5L433,135.5ZM381.66,192.5L382.66,192.5L439.66,135.5L438.66,135.5ZM387.32,192.5L388.32,192.5L445.32,135.5L444.32,135.5ZM392.98,192.5L393.98,192.5L450.98,135.5L449.98,135.5ZM398.64,192.5L399.64,192.5L456.64,135.5L455.64,135.5ZM404.3,192.5L405.3,192.5L462.3,135.5L461.3,135.5ZM409.96,192.5L410.96,192.5L467.96,135.5L466.96,135.5ZM415.62,192.5L416.62,192.5L473.62,135.5L472.62,135.5ZM421.28,192.5L422.28,192.5L479.28,135.5L478.28,135.5ZM426.94,192.5L427.94,192.5L484.94,135.5L483.94,135.5ZM432.6,192.5L433.6,192.5L490.6,135.5L489.6,135.5ZM438.26,192.5L439.26,192.5L496.26,135.5L495.26,135.5ZM443.92,192.5L444.92,192.5L501.92,135.5L500.92,135.5ZM449.58,192.5L450.58,192.5L507.58,135.5L506.58,135.5ZM455.24,192.5L456.24,192.5L513.24,135.5L512.24,135.5ZM460.9,192.5L461.9,192.5L518.9,135.5L517.9,135.5ZM466.56,192.5L467.56,192.5L524.56,135.5L523.56,135.5ZM472.22,192.5L473.22,192.5L530.22,135.5L529.22,135.5ZM477.88,192.5L478.88,192.5L535.88,135.5L534.88,135.5Z" fill="#00ff00" mask="url(#c11)"/>
<line x1="239.5" y1="135.5" x2="479.5" y2="135.5" stroke="#ffffff" stroke-width="1"/>
<line x1="239.5" y1="135.5" x2="239.5" y2="321.5" stroke="#ffffff" stroke-width="1"/>
<line x1="479.5" y1="135.5" x2="479.5" y2="321.5" stroke="#ffffff" stroke-width="1"/>
<line x1="239.5" y1="183.5" x2="293.5" y2="183.5" stroke="#ffffff" stroke-width="1"/>
<line x1="425.5" y1="183.5" x2="479.5" y2="183.5" stroke="#ffffff" stroke-width="1"/>
<path d="M221.5,105.5L497.5,105.5M497.5,105.5L497.5,135.5M497.5,135.5L221.5,135.5M221.5,135.5L221.5,105.5" fill="none" stroke="#ffffff" stroke-width="1" stroke-linecap="square"/>
<path d="M190.9,105.5L191.9,105.5L221.9,135.5L220.9,135.5ZM196.56,105.5L197.56,105.5L227.56,135.5L226.56,135.5ZM202.22,105.5L203.22,105.5L233.22,135.5L232.22,135.5ZM207.88,105.5L208.88,105.5L238.88,135.5L237.88,135.5ZM213.54,105.5L214.54,105.5L244.54,135.5L243.54,135.5ZM219.2,105.5L220.2,105.5L250.2,135.5L249.2,135.5ZM224.86,105.5L225.86,105.5L255.86,135.5L254.86,135.5ZM230.52,105.5L231.52,105.5L261.52,135.5L260.52,135.5ZM236.18,105.5L237.18,105.5L267.18,135.5L266.18,135.5ZM241.84,105.5L242.84,105.5L272.84,135.5L271.84,135.5ZM248,105L248,106L278,136L278,135ZM253.16,105.5L254.16,105.5L284.16,135.5L283.16,135.5ZM258.82,105.5L259.82,105.5L289.82,135.5L288.82,135.5ZM264.48,105.5L265.48,105.5L295.48,135.5L294.48,135.5ZM270.14,105.5L271.14,105.5L301.14,135.5L300.14,135.5ZM275.8,105.5L276.8,105.5L306.8,135.5L305.8,135.5ZM281.46,105.5L282.46,105.5L312.46,135.5L311.46,135.5ZM287.12,105.5L288.12,105.5L318.12,135.5L317.12,135.5ZM292.78,105.5L293.78,105.5L323.78,135.5L322.78,135.5ZM298.44,105.5L299.44,105.5L329.44,135.5L328.44,135.5ZM304.1,105.5L305.1,105.5L335.1,135.5L334.1,135.5ZM309.76,105.5L310.76,105.5L340.76,135.5L339.76,135.5ZM315.42,105.5L316.42,105.5L346.42,135.5L345.42,135.5ZM321.08,105.5L322.08,105.5L352.08,135.5L351.08,135.5ZM326.74,105.5L327.74,105.5L357.74,135.5L356.74,135.5ZM332.4,105.5L333.4,105.5L363.4,135.5L362.4,135.5ZM338.06,105.5L339.06,105.5L369.06,135.5L368.06,135.5ZM343.72,105.5L344.72,105.5L374.72,135.5L373.72,135.5ZM349.38,105.5L350.38,105.5L380.38,135.5L379.38,135.5ZM355.04,105.5L356.04,105.5L386.04,135.5L385.04,135.5ZM360.7,105.5L361.7,105.5L391.7,135.5L390.7,135.5ZM366.36,105.5L367.36,105.5L397.36,135.5L396.36,135.5ZM372.02,105.5L373.02,105.5L403.02,135.5L402.02,135.5ZM377.68,105.5L378.68,105.5L408.68,135.5L407.68,135.5ZM383.34,105.5L384.34,105.5L414.34,135.5L413.34,135.5ZM389,105.5L390,105.5L420,135.5L419,135.5ZM394.66,105.5L395.66,105.5L425.66,135.5L424.66,135.5ZM400.32,105.5L401.32,105.5L431.32,135.5L430.32,135.5ZM405.98,105.5L406.98,105.5L436.98,135.5L435.98,135.5ZM411.64,105.5L412.64,105.5L442.64,135.5L441.64,135.5ZM417.3,105.5L418.3,105.5L448.3,135.5L447.3,135.5ZM422.96,105.5L423.96,105.5L453.96,135.5L452.96,135.5ZM428.62,105.5L429.62,105.5L459.62,135.5L458.62,135.5ZM434.28,105.5L435.28,105.5L465.28,135.5L464.28,135.5ZM439.94,105.5L440.94,105.5L470.94,135.5L469.94,135.5ZM445.6,105.5L446.6,105.5L476.6,135.5L475.6,135.5ZM451.26,105.5L452.26,105.5L482.26,135.5L481.26,135.5ZM456.92,105.5L457.92,105.5L487.92,135.5L486.92,135.5ZM462.58,105.5L463.58,105.5L493.58,135.5L492.58,135.5ZM468.24,105.5L469.24,105.5L499.24,135.5L498.24,135.5ZM473.9,105.5L474.9,105.5L504.9,135.5L503.9,135.5ZM479.56,105.5L480.56,105.5L510.56,135.5L509.56,135.5ZM485.72,105L485.72,106L515.72,136L515.72,135ZM490.88,105.5L491.88,105.5L521.88,135.5L520.88,135.5ZM496.54,105.5L497.54,105.5L527.54,135.5L526.54,135.5Z" fill="#00ff00" mask="url(#c12)"/>
<polygon points="326.5,93.5 392.5,93.5 392.5,105.5 326.5,105.5" fill="#000" stroke="none"/>
<path d="M326.5,93.5L392.5,93.5M392.5,93.5L392.5,105.5M392.5,105.5L326.5,105.5M326.5,105.5L326.5,93.5" fill="none" stroke="#ffffff" stroke-width="1" stroke-linecap="square"/>
<path d="M314.84,105.5L315.84,105.5L327.84,93.5L326.84,93.5ZM320.5,105.5L321.5,105.5L333.5,93.5L332.5,93.5ZM326.16,105.5L327.16,105.5L339.16,93.5L338.16,93.5ZM331.82,105.5L332.82,105.5L344.82,93.5L343.82,93.5ZM337.48,105.5L338.48,105.5L350.48,93.5L349.48,93.5ZM343.14,105.5L344.14,105.5L356.14,93.5L355.14,93.5ZM348.8,105.5L349.8,105.5L361.8,93.5L360.8,93.5ZM354.46,105.5L355.46,105.5L367.46,93.5L366.46,93.5ZM360.12,105.5L361.12,105.5L373.12,93.5L372.12,93.5ZM365.78,105.5L366.78,105.5L378.78,93.5L377.78,93.5ZM371.44,105.5L372.44,105.5L384.44,93.5L383.44,93.5ZM377.1,105.5L378.1,105.5L390.1,93.5L389.1,93.5ZM382.76,105.5L383.76,105.5L395.76,93.5L394.76,93.5ZM388.42,105.5L389.42,105.5L401.42,93.5L400.42,93.5Z" fill="#00ff00" mask="url(#c13)"/>
<polygon points="350.5,105.5 369.5,105.5 369.5,135.5 350.5,135.5" fill="#000" stroke="none"/>
<path d="M350.5,105.5L369.5,105.5M369.5,105.5L369.5,135.5M369.5,135.5L350.5,135.5M350.5,135.5L350.5,105.5" fill="none" stroke="#ffffff" stroke-width="1" stroke-linecap="square"/>
<path d="M316.8,135.5L317.8,135.5L347.8,105.5L346.8,105.5ZM322.46,135.5L323.46,135.5L353.46,105.5L352.46,105.5ZM328.12,135.5L329.12,135.5L359.12,105.5L358.12,105.5ZM333.78,135.5L334.78,135.5L364.78,105.5L363.78,105.5ZM339.44,135.5L340.44,135.5L370.44,105.5L369.44,105.5ZM345.1,135.5L346.1,135.5L376.1,105.5L375.1,105.5ZM350.76,135.5L351.76,135.5L381.76,105.5L380.76,105.5ZM356.42,135.5L357.42,135.5L387.42,105.5L386.42,105.5ZM362.08,135.5L363.08,135.5L393.08,105.5L392.08,105.5ZM367.74,135.5L368.74,135.5L398.74,105.5L397.74,105.5Z" fill="#00ff00" mask="url(#c14)"/>
<path d="M221.5,105.5L209.5,105.5M209.5,105.5L209.5,189.5M209.5,189.5L225.5,189.5M225.5,189.5L225.5,186" fill="none" stroke="#ffffff" stroke-width="1" stroke-linecap="square"/>
<path d="M497.5,105.5L509.5,105.5M509.5,105.5L509.5,189.5M509.5,189.5L494.5,189.5M494.5,189.5L494.5,186" fill="none" stroke="#ffffff" stroke-width="1" stroke-linecap="square"/>
<rect x="253.5" y="105.5" width="24" height="141" fill="#000" stroke="none" stroke-width="1"/>
<rect x="250.5" y="105.5" width="31" height="7" fill="#000" stroke="#ffffff" stroke-width="1"/>
<line x1="253.5" y1="112.5" x2="253.5" y2="246.5" stroke="#ffffff" stroke-width="1"/>
<line x1="277.5" y1="112.5" x2="277.5" y2="246.5" stroke="#ffffff" stroke-width="1"/>
<path d="M257,240L274,240" fill="none" stroke="#ffffff" stroke-width="1" stroke-linecap="square"/>
<path d="M254,231.5L255,231.5L257.5,240L256.5,240ZM273.5,240L274.5,240L277,231.5L276,231.5Z" fill="#ffffff"/>
<line x1="254.5" y1="231.5" x2="276.5" y2="231.5" stroke="#ffffff" stroke-width="1"/>
<line x1="253.5" y1="246.5" x2="277.5" y2="246.5" stroke="#ffffff" stroke-width="1"/>
<rect x="448.5" y="105.5" width="14" height="30" fill="#000" stroke="#00ff00" stroke-width="1"/>
<rect x="449.5" y="105.5" width="12" height="30" fill="none" stroke="#ffffff" stroke-width="1"/>
<line x1="449.5" y1="111.5" x2="461.5" y2="111.5" stroke="#ffffff" stroke-width="2"/>
<line x1="450.5" y1="130.5" x2="461.5" y2="130.5" stroke="#ffffff" stroke-width="1"/>
<rect x="443.5" y="135.5" width="24" height="58" fill="#000" stroke="#ffffff" stroke-width="1"/>
<rect x="439.5" y="147.5" width="4" height="46" fill="#000" stroke="#ffffff" stroke-width="1"/>
<rect x="467.5" y="147.5" width="5" height="46" fill="#000" stroke="#ffffff" stroke-width="1"/>
<rect x="439.5" y="193.5" width="33" height="14" fill="#000" stroke="none" stroke-width="1"/>
<path d="M440.5,193.5L471.5,193.5M471.5,193.5L471.5,201.5M471.5,201.5L457.5,201.5M457.5,201.5L457.5,199.5M457.5,199.5L453.5,199.5M453.5,199.5L453.5,201.5M453.5,201.5L440.5,201.5M440.5,201.5L440.5,193.5" fill="none" stroke="#ffffff" stroke-width="1" stroke-linecap="square"/>
<path d="M439.5,207.5L439.5,202.5M439.5,202.5L471.5,202.5M471.5,202.5L471.5,207.5" fill="none" stroke="#ffffff" stroke-width="1" stroke-linecap="square"/>
<line x1="439.5" y1="207.5" x2="472.5" y2="207.5" stroke="#ffffff" stroke-width="1"/>
<rect x="448.5" y="264.5" width="16" height="72" fill="#000" stroke="#ffffff" stroke-width="1"/>
<polygon points="448.5,264.5 451.5,261.5 461.5,261.5 464.5,264.5" fill="#000" stroke="none"/>
<path d="M451.5,261.5L461.5,261.5" fill="none" stroke="#ffffff" stroke-width="1" stroke-linecap="square"/>
<path d="M448,264.5L449,264.5L452,261.5L451,261.5ZM461,261.5L462,261.5L465,264.5L464,264.5Z" fill="#ffffff"/>
<line x1="450.5" y1="306.5" x2="463.5" y2="306.5" stroke="#ffffff" stroke-width="1"/>
<line x1="450.5" y1="264.5" x2="450.5" y2="306.5" stroke="#00ff00" stroke-width="1"/>
<line x1="463.5" y1="264.5" x2="463.5" y2="306.5" stroke="#00ff00" stroke-width="1"/>
<line x1="450.5" y1="306.5" x2="450.5" y2="336.5" stroke="#ffffff" stroke-width="1"/>
<line x1="463.5" y1="306.5" x2="463.5" y2="336.5" stroke="#ffffff" stroke-width="1"/>
<rect x="445.5" y="336.5" width="22" height="14" fill="#000" stroke="#ffffff" stroke-width="1"/>
<rect x="324.5" y="153.5" width="10" height="138" fill="#000" stroke="#ffffff" stroke-width="1"/>
<rect x="320.5" y="291.5" width="18" height="6" fill="#000" stroke="#ffffff" stroke-width="1"/>
<rect x="384.5" y="153.5" width="10" height="138" fill="#000" stroke="#ffffff" stroke-width="1"/>
<rect x="380.5" y="291.5" width="18" height="6" fill="#000" stroke="#ffffff" stroke-width="1"/>
<rect x="295.5" y="283.5" width="9" height="28" fill="#000" stroke="#ffffff" stroke-width="1"/>
<line x1="296.5" y1="283.5" x2="296.5" y2="311.5" stroke="#00ff00" stroke-width="1"/>
<line x1="303.5" y1="283.5" x2="303.5" y2="311.5" stroke="#00ff00" stroke-width="1"/>
<rect x="291.5" y="311.5" width="16" height="9" fill="#000" stroke="#ffffff" stroke-width="1"/>
<rect x="330" y="93.5" width="13.5" height="12" fill="#000" stroke="#ffffff" stroke-width="1"/>
<rect x="333.5" y="105.5" width="7" height="20" fill="#000" stroke="none" stroke-width="1"/>
<path d="M332,94.5L341.5,94.5M342.5,95.5L342.5,102.5M342.5,102.5L331,102.5M331,102.5L331,95.5" fill="none" stroke="#ffffff" stroke-width="1" stroke-linecap="square"/>
<path d="M330.5,95.5L331.5,95.5L332.5,94.5L331.5,94.5ZM341,94.5L342,94.5L343,95.5L342,95.5Z" fill="#ffffff"/>
<line x1="333.5" y1="102.5" x2="333.5" y2="125.5" stroke="#ffffff" stroke-width="1"/>
<line x1="340.5" y1="102.5" x2="340.5" y2="125.5" stroke="#ffffff" stroke-width="1"/>
<line x1="334.5" y1="102.5" x2="334.5" y2="125.5" stroke="#00ff00" stroke-width="1"/>
<line x1="339.5" y1="102.5" x2="339.5" y2="125.5" stroke="#00ff00" stroke-width="1"/>
<polygon points="333.5,125.5 335.5,129.5 338.5,129.5 340.5,125.5" fill="#fff" stroke="none"/>
<path d="M335.5,129.5L338.5,129.5M340.5,125.5L333.5,125.5" fill="none" stroke="#ffffff" stroke-width="1" stroke-linecap="square"/>
<path d="M333,125.5L334,125.5L336,129.5L335,129.5ZM338,129.5L339,129.5L341,125.5L340,125.5Z" fill="#ffffff"/>
<rect x="376" y="93.5" width="13.5" height="12" fill="#000" stroke="#ffffff" stroke-width="1"/>
<rect x="379.5" y="105.5" width="7" height="20" fill="#000" stroke="none" stroke-width="1"/>
<path d="M378,94.5L387.5,94.5M388.5,95.5L388.5,102.5M388.5,102.5L377,102.5M377,102.5L377,95.5" fill="none" stroke="#ffffff" stroke-width="1" stroke-linecap="square"/>
<path d="M376.5,95.5L377.5,95.5L378.5,94.5L377.5,94.5ZM387,94.5L388,94.5L389,95.5L388,95.5Z" fill="#ffffff"/>
<line x1="379.5" y1="102.5" x2="379.5" y2="125.5" stroke="#ffffff" stroke-width="1"/>
<line x1="386.5" y1="102.5" x2="386.5" y2="125.5" stroke="#ffffff" stroke-width="1"/>
<line x1="380.5" y1="102.5" x2="380.5" y2="125.5" stroke="#00ff00" stroke-width="1"/>
<line x1="385.5" y1="102.5" x2="385.5" y2="125.5" stroke="#00ff00" stroke-width="1"/>
<polygon points="379.5,125.5 381.5,129.5 384.5,129.5 386.5,125.5" fill="#fff" stroke="none"/>
<path d="M381.5,129.5L384.5,129.5M386.5,125.5L379.5,125.5" fill="none" stroke="#ffffff" stroke-width="1" stroke-linecap="square"/>
<path d="M379,125.5L380,125.5L382,129.5L381,129.5ZM384,129.5L385,129.5L387,125.5L386,125.5Z" fill="#ffffff"/>
<polygon points="357.5,96.5 362.5,96.5 363.5,135.5 356.5,135.5" fill="url(#gd)" stroke="none"/>
<polygon points="357,135.5 363,135.5 361,149.5 361,152 358.5,152 358.5,149.5" fill="url(#gd)" stroke="none"/>
<path d="M356.5,96.5 L355.5,135.5 M363.5,96.5 L364.5,135.5 M356,135.5 L358,149.5 M364,135.5 L361.5,149.5" fill="none" stroke="#ffffff" stroke-width="1" stroke-dasharray="1 2"/>
<path d="M354.5,97.5L365.5,97.5" fill="none" stroke="#ffffff" stroke-width="1" stroke-linecap="square"/>
<path d="M351.5,95L351.5,96L354.5,98L354.5,97ZM365.5,97L365.5,98L368.5,96L368.5,95Z" fill="#ffffff"/>
<path d="M294.7,184.5 L301.5,191 Q303.5,193 305,190.5 L305.8,188 L307.5,161 L310,157 L316.5,152.3" fill="none" stroke="#00ff00" stroke-width="2" stroke-linejoin="round"/>
<path d="M294.7,184.5 L301.5,191 Q303.5,193 305,190.5 L305.8,188 L307.5,161 L310,157 L316.5,152.3" fill="none" stroke="#ffffff" stroke-width="1" stroke-dasharray="1 2.2" transform="translate(-0.8,-0.6)"/>
<path d="M294.7,184.5 L301.5,191 Q303.5,193 305,190.5 L305.8,188 L307.5,161 L310,157 L316.5,152.3" fill="none" stroke="#ffffff" stroke-width="1" stroke-dasharray="1 2.2" transform="translate(0.9,0.7)" stroke-dashoffset="1.5"/>
<path d="M425,184.5 L418.2,191 Q416.2,193 414.7,190.5 L414,188 L412,161 L409.5,157 L402.5,152.3" fill="none" stroke="#00ff00" stroke-width="2" stroke-linejoin="round"/>
<path d="M425,184.5 L418.2,191 Q416.2,193 414.7,190.5 L414,188 L412,161 L409.5,157 L402.5,152.3" fill="none" stroke="#ffffff" stroke-width="1" stroke-dasharray="1 2.2" transform="translate(-0.8,-0.6)"/>
<path d="M425,184.5 L418.2,191 Q416.2,193 414.7,190.5 L414,188 L412,161 L409.5,157 L402.5,152.3" fill="none" stroke="#ffffff" stroke-width="1" stroke-dasharray="1 2.2" transform="translate(0.9,0.7)" stroke-dashoffset="1.5"/>
<path d="M315.5,152.3 L403.5,152.3" fill="none" stroke="#00ff00" stroke-width="3"/>
<path d="M315.5,152.3 L403.5,152.3" fill="none" stroke="#ffffff" stroke-width="1" stroke-dasharray="1 2" transform="translate(0,-1)"/>
<path d="M315.5,152.3 L403.5,152.3" fill="none" stroke="#ffffff" stroke-width="1" stroke-dasharray="1 2" transform="translate(0,1)" stroke-dashoffset="1.5"/>
<path d="M324.0,152 A5.5,5.5 0 0 1 335.0,152Z" fill="url(#gd)" stroke="none" stroke-width="1"/>
<path d="M324.0,151 A5.5,5.5 0 0 1 335.0,151" fill="none" stroke="#ffffff" stroke-width="1" stroke-dasharray="1 2"/>
<path d="M384.0,152 A5.5,5.5 0 0 1 395.0,152Z" fill="url(#gd)" stroke="none" stroke-width="1"/>
<path d="M384.0,151 A5.5,5.5 0 0 1 395.0,151" fill="none" stroke="#ffffff" stroke-width="1" stroke-dasharray="1 2"/>
<path d="M239.5,135.5L217.5,135.5M217.5,135.5L217.5,182.2M225.5,186L225.5,189.5" fill="none" stroke="#ffffff" stroke-width="1" stroke-linecap="square"/>
<path d="M217.5,181.7L217.5,182.7L225.5,186.5L225.5,185.5Z" fill="#ffffff"/>
<path d="M218.5,136.5L220.5,136.5M220.5,136.5L220.5,139.7M220.5,139.7L218.5,139.7M218.5,139.7L218.5,136.5" fill="none" stroke="#ffffff" stroke-width="1" stroke-linecap="square"/>
<path d="M226.9,142.9L226.9,186.5" fill="none" stroke="#ffffff" stroke-width="1" stroke-linecap="square"/>
<path d="M220.5,139.2L220.5,140.2L226.9,143.4L226.9,142.4Z" fill="#ffffff"/>
<path d="M220.5,136.5L238,136.5" fill="none" stroke="#ffffff" stroke-width="1" stroke-linecap="square"/>
<circle cx="233.6" cy="177.4" r="5.6" fill="#000" stroke="#ffffff" stroke-width="1"/>
<circle cx="233.6" cy="177.4" r="2.6" fill="none" stroke="#ffffff" stroke-width="1"/>
<line x1="227.5" y1="177.4" x2="238" y2="177.4" stroke="#ff0000" stroke-width="1"/>
<path d="M220.5,207.3L220.5,218.9M220.5,218.9L237.8,218.9M238.5,213.5L230.5,213.5" fill="none" stroke="#ffffff" stroke-width="1" stroke-linecap="square"/>
<path d="M226,186.7L227,186.7L221,207.3L220,207.3ZM237.3,218.9L238.3,218.9L239,213.5L238,213.5ZM230,213.5L231,213.5L230.3,210.3L229.3,210.3ZM229.8,209.8L229.8,210.8L238.6,208.3L238.6,207.3Z" fill="#ffffff"/>
<path d="M238.1,184.1L239.1,184.1L230.9,210.5L229.9,210.5Z" fill="#ffffff"/>
<path d="M479.7,135.5L501.7,135.5M501.7,135.5L501.7,182.2M493.7,186L493.7,189.5" fill="none" stroke="#ffffff" stroke-width="1" stroke-linecap="square"/>
<path d="M501.7,181.7L501.7,182.7L493.7,186.5L493.7,185.5Z" fill="#ffffff"/>
<path d="M500.7,136.5L498.7,136.5M498.7,136.5L498.7,139.7M498.7,139.7L500.7,139.7M500.7,139.7L500.7,136.5" fill="none" stroke="#ffffff" stroke-width="1" stroke-linecap="square"/>
<path d="M492.3,142.9L492.3,186.5" fill="none" stroke="#ffffff" stroke-width="1" stroke-linecap="square"/>
<path d="M498.7,139.2L498.7,140.2L492.3,143.4L492.3,142.4Z" fill="#ffffff"/>
<path d="M498.7,136.5L481.2,136.5" fill="none" stroke="#ffffff" stroke-width="1" stroke-linecap="square"/>
<circle cx="485.6" cy="177.4" r="5.6" fill="#000" stroke="#ffffff" stroke-width="1"/>
<circle cx="485.6" cy="177.4" r="2.6" fill="none" stroke="#ffffff" stroke-width="1"/>
<line x1="491.7" y1="177.4" x2="481.2" y2="177.4" stroke="#ff0000" stroke-width="1"/>
<path d="M498.7,207.3L498.7,218.9M498.7,218.9L481.4,218.9M480.7,213.5L488.7,213.5" fill="none" stroke="#ffffff" stroke-width="1" stroke-linecap="square"/>
<path d="M492.2,186.7L493.2,186.7L499.2,207.3L498.2,207.3ZM480.9,218.9L481.9,218.9L481.2,213.5L480.2,213.5ZM488.2,213.5L489.2,213.5L489.9,210.3L488.9,210.3ZM489.4,209.8L489.4,210.8L480.6,208.3L480.6,207.3Z" fill="#ffffff"/>
<path d="M480.1,184.1L481.1,184.1L489.3,210.5L488.3,210.5Z" fill="#ffffff"/>
<line x1="359.5" y1="91" x2="359.5" y2="358" stroke="#ff0000" stroke-width="1" stroke-dasharray="14 3 3 3"/>
<line x1="265.5" y1="100" x2="265.5" y2="255" stroke="#ff0000" stroke-width="1" stroke-dasharray="22 3 3 3"/>
<line x1="262.5" y1="251" x2="262.5" y2="360" stroke="#ff0000" stroke-width="1" stroke-dasharray="14 3 3 3"/>
<line x1="455.5" y1="101" x2="455.5" y2="215" stroke="#ff0000" stroke-width="1" stroke-dasharray="30 3 3 3"/>
<line x1="456.5" y1="257" x2="456.5" y2="357" stroke="#ff0000" stroke-width="1" stroke-dasharray="18 3 3 3"/>
<line x1="329.5" y1="137" x2="329.5" y2="328" stroke="#ff0000" stroke-width="1" stroke-dasharray="20 3 4 3"/>
<line x1="389.5" y1="137" x2="389.5" y2="328" stroke="#ff0000" stroke-width="1" stroke-dasharray="20 3 4 3"/>
<line x1="336.5" y1="90" x2="336.5" y2="131" stroke="#ff0000" stroke-width="1"/>
<line x1="382.5" y1="90" x2="382.5" y2="131" stroke="#ff0000" stroke-width="1"/>
<line x1="299.5" y1="275" x2="299.5" y2="324" stroke="#ff0000" stroke-width="1" stroke-dasharray="9 2"/>
<line x1="419.5" y1="275" x2="419.5" y2="325" stroke="#ff0000" stroke-width="1" stroke-dasharray="20 3"/>
<line x1="203.5" y1="120.5" x2="249.5" y2="120.5" stroke="#ff0000" stroke-width="1" stroke-dasharray="22 3 4 3"/>
<line x1="470.5" y1="120.5" x2="515" y2="120.5" stroke="#ff0000" stroke-width="1" stroke-dasharray="18 3 4 3"/>
<line x1="184.5" y1="118.5" x2="369.5" y2="118.5" stroke="#ff00ff" stroke-width="1"/>
<text x="189" y="117" font-family="Liberation Sans" font-size="7" fill="#ff00ff" text-anchor="start" textLength="15" lengthAdjust="spacingAndGlyphs" font-weight="bold" stroke="#ff00ff" stroke-width="0.4">ø16</text>
<line x1="201.5" y1="194.5" x2="425.5" y2="194.5" stroke="#ff00ff" stroke-width="1"/>
<text x="201.5" y="193" font-family="Liberation Sans" font-size="7" fill="#ff00ff" text-anchor="start" textLength="6" lengthAdjust="spacingAndGlyphs" font-weight="bold" stroke="#ff00ff" stroke-width="0.4">16</text>
<line x1="253.5" y1="128.5" x2="277.5" y2="128.5" stroke="#ff00ff" stroke-width="1"/>
<text x="260" y="127.5" font-family="Liberation Sans" font-size="6.5" fill="#ff00ff" text-anchor="start" textLength="12" lengthAdjust="spacingAndGlyphs" font-weight="bold" stroke="#ff00ff" stroke-width="0.4">ø25</text>
<line x1="253.5" y1="160.5" x2="277.5" y2="160.5" stroke="#ff00ff" stroke-width="1"/>
<text x="258" y="159.5" font-family="Liberation Sans" font-size="6.5" fill="#ff00ff" text-anchor="start" textLength="16" lengthAdjust="spacingAndGlyphs" font-weight="bold" stroke="#ff00ff" stroke-width="0.4">ø20</text>
<line x1="324.5" y1="172.5" x2="351" y2="172.5" stroke="#ff00ff" stroke-width="1"/>
<text x="337.5" y="171.5" font-family="Liberation Sans" font-size="6.5" fill="#ff00ff" text-anchor="start" textLength="12.5" lengthAdjust="spacingAndGlyphs" font-weight="bold" stroke="#ff00ff" stroke-width="0.4">ø8</text>
<line x1="335.5" y1="340.5" x2="383.5" y2="340.5" stroke="#ff00ff" stroke-width="1"/>
<text x="363" y="338" font-family="Liberation Sans" font-size="6.5" fill="#ff00ff" text-anchor="start" textLength="12" lengthAdjust="spacingAndGlyphs" font-weight="bold" stroke="#ff00ff" stroke-width="0.4">ø40</text>
<line x1="335.5" y1="338" x2="335.5" y2="343" stroke="#ff00ff" stroke-width="1"/>
<line x1="383.5" y1="338" x2="383.5" y2="343" stroke="#ff00ff" stroke-width="1"/>
<text x="353" y="88" font-family="Liberation Sans" font-size="7" fill="#00ff00" text-anchor="start" textLength="12" lengthAdjust="spacingAndGlyphs" font-weight="bold" stroke="#00ff00" stroke-width="0.4">A–A</text>
<path d="M166,64.5L167.6,64.5L168.1,65.2L168.1,66.7L167.6,67.4L166,67.4L165.5,66.7L165.5,65.2L166,64.5M166,67.4L165.5,68.2L165.5,69.8L166,70.7L167.6,70.7L168.1,69.8L168.1,68.2L167.6,67.4" fill="none" stroke="#ffffff" stroke-width="1" stroke-linejoin="round"/>
<line x1="161.5" y1="73.5" x2="173.5" y2="73.5" stroke="#ffffff" stroke-width="1"/>
<path d="M173.5,73L173.5,74L218.8,112.5L218.8,111.5Z" fill="#ffffff"/>
<rect x="218.3" y="111.5" width="1" height="1" fill="#fff" stroke="#ffffff" stroke-width="1"/>
<path d="M223.8,70.4L224.2,70.7L225.4,70.7L226.1,69.5L226.1,65.4L225.6,64.5L224,64.5L223.5,65.4L223.5,67L224,67.9L226.1,67.9" fill="none" stroke="#ffffff" stroke-width="1" stroke-linejoin="round"/>
<line x1="219.5" y1="73.5" x2="232" y2="73.5" stroke="#ffffff" stroke-width="1"/>
<path d="M231.5,73.5L232.5,73.5L263.3,109.7L262.3,109.7Z" fill="#ffffff"/>
<rect x="262.3" y="109.2" width="1" height="1" fill="#fff" stroke="#ffffff" stroke-width="1"/>
<path d="M270.1,65.7L270.9,64.5L270.9,70.7M273.5,65.4L274,64.5L275.6,64.5L276.1,65.4L276.1,69.8L275.6,70.7L274,70.7L273.5,69.8L273.5,65.4" fill="none" stroke="#ffffff" stroke-width="1" stroke-linejoin="round"/>
<line x1="268" y1="73.5" x2="281" y2="73.5" stroke="#ffffff" stroke-width="1"/>
<path d="M281,73L281,74L335.5,98.2L335.5,97.2Z" fill="#ffffff"/>
<rect x="335" y="97.2" width="1" height="1" fill="#fff" stroke="#ffffff" stroke-width="1"/>
<path d="M320.1,65.7L320.9,64.5L320.9,70.7M323.1,65.7L323.9,64.5L323.9,70.7" fill="none" stroke="#ffffff" stroke-width="1" stroke-linejoin="round"/>
<line x1="318" y1="73.5" x2="330" y2="73.5" stroke="#ffffff" stroke-width="1"/>
<path d="M329.5,73.5L330.5,73.5L351.5,98.5L350.5,98.5Z" fill="#ffffff"/>
<rect x="350.5" y="98" width="1" height="1" fill="#fff" stroke="#ffffff" stroke-width="1"/>
<path d="M165.5,100.5L168.1,100.5L166.4,106.7" fill="none" stroke="#ffffff" stroke-width="1" stroke-linejoin="round"/>
<line x1="161.5" y1="109.5" x2="173.5" y2="109.5" stroke="#ffffff" stroke-width="1"/>
<path d="M173.5,109L173.5,110L234.2,150.3L234.2,149.3Z" fill="#ffffff"/>
<rect x="233.7" y="149.3" width="1" height="1" fill="#fff" stroke="#ffffff" stroke-width="1"/>
<path d="M167.8,136.8L167.4,136.5L166.2,136.5L165.5,137.7L165.5,141.8L166,142.7L167.6,142.7L168.1,141.8L168.1,140.2L167.6,139.3L165.5,139.3" fill="none" stroke="#ffffff" stroke-width="1" stroke-linejoin="round"/>
<line x1="161.5" y1="145.5" x2="173.5" y2="145.5" stroke="#ffffff" stroke-width="1"/>
<path d="M173.5,145L173.5,146L233.5,178L233.5,177Z" fill="#ffffff"/>
<rect x="233" y="177" width="1" height="1" fill="#fff" stroke="#ffffff" stroke-width="1"/>
<path d="M168.1,176.5L165.5,176.5L165.5,179.3L167.4,179.3L168.1,180.2L168.1,181.8L167.6,182.7L166,182.7L165.5,181.8" fill="none" stroke="#ffffff" stroke-width="1" stroke-linejoin="round"/>
<line x1="161.5" y1="185.5" x2="173.5" y2="185.5" stroke="#ffffff" stroke-width="1"/>
<path d="M173.5,185L173.5,186L329,250.5L329,249.5Z" fill="#ffffff"/>
<rect x="328.5" y="249.5" width="1" height="1" fill="#fff" stroke="#ffffff" stroke-width="1"/>
<path d="M167.4,220.7L167.4,214.5L165.5,218.8L168.1,218.8" fill="none" stroke="#ffffff" stroke-width="1" stroke-linejoin="round"/>
<line x1="161.5" y1="223.5" x2="173.5" y2="223.5" stroke="#ffffff" stroke-width="1"/>
<path d="M173.5,223L173.5,224L312.7,287.7L312.7,286.7Z" fill="#ffffff"/>
<rect x="312.2" y="286.7" width="1" height="1" fill="#fff" stroke="#ffffff" stroke-width="1"/>
<path d="M165.5,248.4L166,247.5L167.6,247.5L168.1,248.4L168.1,249.7L167.6,250.5L166.5,250.5M167.6,250.5L168.1,251.3L168.1,252.8L167.6,253.7L166,253.7L165.5,252.8" fill="none" stroke="#ffffff" stroke-width="1" stroke-linejoin="round"/>
<line x1="161.5" y1="256.5" x2="173.5" y2="256.5" stroke="#ffffff" stroke-width="1"/>
<path d="M173.5,256L173.5,257L299,303.5L299,302.5Z" fill="#ffffff"/>
<rect x="298.5" y="302.5" width="1" height="1" fill="#fff" stroke="#ffffff" stroke-width="1"/>
<path d="M165.5,278.7L166,277.5L167.6,277.5L168.1,278.7L168.1,280L165.5,283.7L168.1,283.7" fill="none" stroke="#ffffff" stroke-width="1" stroke-linejoin="round"/>
<line x1="161.5" y1="286.5" x2="173.5" y2="286.5" stroke="#ffffff" stroke-width="1"/>
<path d="M173.5,286L173.5,287L323.5,315.5L323.5,314.5Z" fill="#ffffff"/>
<rect x="323" y="314.5" width="1" height="1" fill="#fff" stroke="#ffffff" stroke-width="1"/>
<path d="M166.2,310.7L166.9,309.5L166.9,315.7" fill="none" stroke="#ffffff" stroke-width="1" stroke-linejoin="round"/>
<line x1="161.5" y1="318.5" x2="173.5" y2="318.5" stroke="#ffffff" stroke-width="1"/>
<path d="M173.5,318L173.5,319L222.7,343L222.7,342Z" fill="#ffffff"/>
<rect x="222.2" y="342" width="1" height="1" fill="#fff" stroke="#ffffff" stroke-width="1"/>
<path d="M522.1,65.7L522.9,64.5L522.9,70.7M525.5,65.7L526,64.5L527.6,64.5L528.1,65.7L528.1,67L525.5,70.7L528.1,70.7" fill="none" stroke="#ffffff" stroke-width="1" stroke-linejoin="round"/>
<line x1="519.5" y1="73.5" x2="532" y2="73.5" stroke="#ffffff" stroke-width="1"/>
<path d="M519.5,73L519.5,74L458.5,118.5L458.5,117.5Z" fill="#ffffff"/>
<rect x="458" y="117.5" width="1" height="1" fill="#fff" stroke="#ffffff" stroke-width="1"/>
<path d="M522.1,94.7L522.9,93.5L522.9,99.7M525.5,94.4L526,93.5L527.6,93.5L528.1,94.4L528.1,95.7L527.6,96.5L526.5,96.5M527.6,96.5L528.1,97.3L528.1,98.8L527.6,99.7L526,99.7L525.5,98.8" fill="none" stroke="#ffffff" stroke-width="1" stroke-linejoin="round"/>
<line x1="519.5" y1="102.5" x2="532" y2="102.5" stroke="#ffffff" stroke-width="1"/>
<path d="M519.5,102L519.5,103L487,126.5L487,125.5Z" fill="#ffffff"/>
<rect x="486.5" y="125.5" width="1" height="1" fill="#fff" stroke="#ffffff" stroke-width="1"/>
<path d="M522.1,121.7L522.9,120.5L522.9,126.7M527.5,126.7L527.5,120.5L525.5,124.8L528.1,124.8" fill="none" stroke="#ffffff" stroke-width="1" stroke-linejoin="round"/>
<line x1="519.5" y1="129.5" x2="532" y2="129.5" stroke="#ffffff" stroke-width="1"/>
<path d="M519.5,129L519.5,130L475.8,162.2L475.8,161.2Z" fill="#ffffff"/>
<rect x="475.3" y="161.2" width="1" height="1" fill="#fff" stroke="#ffffff" stroke-width="1"/>
<path d="M522.1,161.7L522.9,160.5L522.9,166.7M528.1,160.5L525.5,160.5L525.5,163.3L527.5,163.3L528.1,164.2L528.1,165.8L527.6,166.7L526,166.7L525.5,165.8" fill="none" stroke="#ffffff" stroke-width="1" stroke-linejoin="round"/>
<line x1="519.5" y1="168.5" x2="532" y2="168.5" stroke="#ffffff" stroke-width="1"/>
<path d="M519.5,168L519.5,169L413,202.3L413,201.3Z" fill="#ffffff"/>
<rect x="412.5" y="201.3" width="1" height="1" fill="#fff" stroke="#ffffff" stroke-width="1"/>
<path d="M522.1,206.7L522.9,205.5L522.9,211.7M527.8,205.8L527.5,205.5L526.1,205.5L525.5,206.7L525.5,210.8L526,211.7L527.6,211.7L528.1,210.8L528.1,209.2L527.6,208.3L525.5,208.3" fill="none" stroke="#ffffff" stroke-width="1" stroke-linejoin="round"/>
<line x1="519.5" y1="214.5" x2="532" y2="214.5" stroke="#ffffff" stroke-width="1"/>
<path d="M519.5,214L519.5,215L476,198.5L476,197.5Z" fill="#ffffff"/>
<rect x="475.5" y="197.5" width="1" height="1" fill="#fff" stroke="#ffffff" stroke-width="1"/>
<path d="M522.1,241.7L522.9,240.5L522.9,246.7M525.5,240.5L528.1,240.5L526.4,246.7" fill="none" stroke="#ffffff" stroke-width="1" stroke-linejoin="round"/>
<line x1="519.5" y1="249.5" x2="532" y2="249.5" stroke="#ffffff" stroke-width="1"/>
<path d="M519.5,249L519.5,250L459,233L459,232Z" fill="#ffffff"/>
<rect x="458.5" y="232" width="1" height="1" fill="#fff" stroke="#ffffff" stroke-width="1"/>
<path d="M522.1,275.7L522.9,274.5L522.9,280.7M526,274.5L527.6,274.5L528.1,275.2L528.1,276.7L527.6,277.4L526,277.4L525.5,276.7L525.5,275.2L526,274.5M526,277.4L525.5,278.2L525.5,279.8L526,280.7L527.6,280.7L528.1,279.8L528.1,278.2L527.6,277.4" fill="none" stroke="#ffffff" stroke-width="1" stroke-linejoin="round"/>
<line x1="519.5" y1="283.5" x2="532" y2="283.5" stroke="#ffffff" stroke-width="1"/>
<path d="M519.5,283L519.5,284L473,261.2L473,260.2Z" fill="#ffffff"/>
<rect x="472.5" y="260.2" width="1" height="1" fill="#fff" stroke="#ffffff" stroke-width="1"/>
<path d="M522.1,290.7L522.9,289.5L522.9,295.7M525.8,295.4L526.1,295.7L527.5,295.7L528.1,294.5L528.1,290.4L527.6,289.5L526,289.5L525.5,290.4L525.5,292L526,292.9L528.1,292.9" fill="none" stroke="#ffffff" stroke-width="1" stroke-linejoin="round"/>
<line x1="519.5" y1="298.5" x2="532" y2="298.5" stroke="#ffffff" stroke-width="1"/>
<path d="M519.5,298L519.5,299L458.5,319.4L458.5,318.4Z" fill="#ffffff"/>
<rect x="458" y="318.4" width="1" height="1" fill="#fff" stroke="#ffffff" stroke-width="1"/>
<path d="M645.5,321.5L742.5,321.5M742.5,321.5L742.5,352.5M742.5,352.5L645.5,352.5M645.5,352.5L645.5,321.5" fill="none" stroke="#ffffff" stroke-width="1" stroke-linecap="square"/>
<path d="M609.66,321.5L610.66,321.5L641.66,352.5L640.66,352.5ZM615.32,321.5L616.32,321.5L647.32,352.5L646.32,352.5ZM620.98,321.5L621.98,321.5L652.98,352.5L651.98,352.5ZM626.64,321.5L627.64,321.5L658.64,352.5L657.64,352.5ZM632.3,321.5L633.3,321.5L664.3,352.5L663.3,352.5ZM637.96,321.5L638.96,321.5L669.96,352.5L668.96,352.5ZM643.62,321.5L644.62,321.5L675.62,352.5L674.62,352.5ZM649.28,321.5L650.28,321.5L681.28,352.5L680.28,352.5ZM654.94,321.5L655.94,321.5L686.94,352.5L685.94,352.5ZM660.6,321.5L661.6,321.5L692.6,352.5L691.6,352.5ZM666.26,321.5L667.26,321.5L698.26,352.5L697.26,352.5ZM671.92,321.5L672.92,321.5L703.92,352.5L702.92,352.5ZM677.58,321.5L678.58,321.5L709.58,352.5L708.58,352.5ZM683.24,321.5L684.24,321.5L715.24,352.5L714.24,352.5ZM688.9,321.5L689.9,321.5L720.9,352.5L719.9,352.5ZM694.56,321.5L695.56,321.5L726.56,352.5L725.56,352.5ZM700.22,321.5L701.22,321.5L732.22,352.5L731.22,352.5ZM705.88,321.5L706.88,321.5L737.88,352.5L736.88,352.5ZM711.54,321.5L712.54,321.5L743.54,352.5L742.54,352.5ZM717.2,321.5L718.2,321.5L749.2,352.5L748.2,352.5ZM722.86,321.5L723.86,321.5L754.86,352.5L753.86,352.5ZM728.52,321.5L729.52,321.5L760.52,352.5L759.52,352.5ZM734.18,321.5L735.18,321.5L766.18,352.5L765.18,352.5ZM739.84,321.5L740.84,321.5L771.84,352.5L770.84,352.5Z" fill="#00ff00" mask="url(#c15)"/>
<line x1="742.5" y1="352.5" x2="766.5" y2="352.5" stroke="#ffffff" stroke-width="1"/>
<path d="M645.5,297.5L766.5,297.5M766.5,297.5L766.5,321.5M766.5,321.5L645.5,321.5M645.5,321.5L645.5,297.5" fill="none" stroke="#ffffff" stroke-width="1" stroke-linecap="square"/>
<path d="M619.56,321.5L620.56,321.5L644.56,297.5L643.56,297.5ZM625.22,321.5L626.22,321.5L650.22,297.5L649.22,297.5ZM630.88,321.5L631.88,321.5L655.88,297.5L654.88,297.5ZM636.54,321.5L637.54,321.5L661.54,297.5L660.54,297.5ZM642.2,321.5L643.2,321.5L667.2,297.5L666.2,297.5ZM647.86,321.5L648.86,321.5L672.86,297.5L671.86,297.5ZM653.52,321.5L654.52,321.5L678.52,297.5L677.52,297.5ZM659.18,321.5L660.18,321.5L684.18,297.5L683.18,297.5ZM664.84,321.5L665.84,321.5L689.84,297.5L688.84,297.5ZM670.5,321.5L671.5,321.5L695.5,297.5L694.5,297.5ZM676.16,321.5L677.16,321.5L701.16,297.5L700.16,297.5ZM681.82,321.5L682.82,321.5L706.82,297.5L705.82,297.5ZM687.48,321.5L688.48,321.5L712.48,297.5L711.48,297.5ZM693.14,321.5L694.14,321.5L718.14,297.5L717.14,297.5ZM698.8,321.5L699.8,321.5L723.8,297.5L722.8,297.5ZM704.46,321.5L705.46,321.5L729.46,297.5L728.46,297.5ZM710.12,321.5L711.12,321.5L735.12,297.5L734.12,297.5ZM715.78,321.5L716.78,321.5L740.78,297.5L739.78,297.5ZM721.44,321.5L722.44,321.5L746.44,297.5L745.44,297.5ZM727.1,321.5L728.1,321.5L752.1,297.5L751.1,297.5ZM732.76,321.5L733.76,321.5L757.76,297.5L756.76,297.5ZM738.42,321.5L739.42,321.5L763.42,297.5L762.42,297.5ZM744.08,321.5L745.08,321.5L769.08,297.5L768.08,297.5ZM749.74,321.5L750.74,321.5L774.74,297.5L773.74,297.5ZM755.4,321.5L756.4,321.5L780.4,297.5L779.4,297.5ZM761.06,321.5L762.06,321.5L786.06,297.5L785.06,297.5Z" fill="#00ff00" mask="url(#c16)"/>
<path d="M645.5,278.5L766.5,278.5M766.5,278.5L766.5,297.5M766.5,297.5L645.5,297.5M645.5,297.5L645.5,278.5" fill="none" stroke="#ffffff" stroke-width="1" stroke-linecap="square"/>
<path d="M624.26,278.5L625.26,278.5L644.26,297.5L643.26,297.5ZM629.92,278.5L630.92,278.5L649.92,297.5L648.92,297.5ZM635.58,278.5L636.58,278.5L655.58,297.5L654.58,297.5ZM641.24,278.5L642.24,278.5L661.24,297.5L660.24,297.5ZM646.9,278.5L647.9,278.5L666.9,297.5L665.9,297.5ZM652.56,278.5L653.56,278.5L672.56,297.5L671.56,297.5ZM658.22,278.5L659.22,278.5L678.22,297.5L677.22,297.5ZM663.88,278.5L664.88,278.5L683.88,297.5L682.88,297.5ZM669.54,278.5L670.54,278.5L689.54,297.5L688.54,297.5ZM675.2,278.5L676.2,278.5L695.2,297.5L694.2,297.5ZM680.86,278.5L681.86,278.5L700.86,297.5L699.86,297.5ZM686.52,278.5L687.52,278.5L706.52,297.5L705.52,297.5ZM692.18,278.5L693.18,278.5L712.18,297.5L711.18,297.5ZM697.84,278.5L698.84,278.5L717.84,297.5L716.84,297.5ZM703.5,278.5L704.5,278.5L723.5,297.5L722.5,297.5ZM709.16,278.5L710.16,278.5L729.16,297.5L728.16,297.5ZM714.82,278.5L715.82,278.5L734.82,297.5L733.82,297.5ZM720.48,278.5L721.48,278.5L740.48,297.5L739.48,297.5ZM726.14,278.5L727.14,278.5L746.14,297.5L745.14,297.5ZM731.8,278.5L732.8,278.5L751.8,297.5L750.8,297.5ZM737.46,278.5L738.46,278.5L757.46,297.5L756.46,297.5ZM743.12,278.5L744.12,278.5L763.12,297.5L762.12,297.5ZM748.78,278.5L749.78,278.5L768.78,297.5L767.78,297.5ZM754.44,278.5L755.44,278.5L774.44,297.5L773.44,297.5ZM760.1,278.5L761.1,278.5L780.1,297.5L779.1,297.5ZM765.76,278.5L766.76,278.5L785.76,297.5L784.76,297.5Z" fill="#00ff00" mask="url(#c17)"/>
<line x1="645.5" y1="246.5" x2="645.5" y2="278.5" stroke="#ffffff" stroke-width="1"/>
<path d="M645.5,207.5L766.5,207.5M766.5,207.5L766.5,246.5M766.5,246.5L645.5,246.5M645.5,246.5L645.5,207.5" fill="none" stroke="#ffffff" stroke-width="1" stroke-linecap="square"/>
<path d="M605,246.5L606,246.5L645,207.5L644,207.5ZM610.66,246.5L611.66,246.5L650.66,207.5L649.66,207.5ZM616.32,246.5L617.32,246.5L656.32,207.5L655.32,207.5ZM621.98,246.5L622.98,246.5L661.98,207.5L660.98,207.5ZM627.64,246.5L628.64,246.5L667.64,207.5L666.64,207.5ZM633.3,246.5L634.3,246.5L673.3,207.5L672.3,207.5ZM638.96,246.5L639.96,246.5L678.96,207.5L677.96,207.5ZM644.62,246.5L645.62,246.5L684.62,207.5L683.62,207.5ZM650.28,246.5L651.28,246.5L690.28,207.5L689.28,207.5ZM655.94,246.5L656.94,246.5L695.94,207.5L694.94,207.5ZM661.6,246.5L662.6,246.5L701.6,207.5L700.6,207.5ZM667.26,246.5L668.26,246.5L707.26,207.5L706.26,207.5ZM672.92,246.5L673.92,246.5L712.92,207.5L711.92,207.5ZM678.58,246.5L679.58,246.5L718.58,207.5L717.58,207.5ZM684.24,246.5L685.24,246.5L724.24,207.5L723.24,207.5ZM689.9,246.5L690.9,246.5L729.9,207.5L728.9,207.5ZM695.56,246.5L696.56,246.5L735.56,207.5L734.56,207.5ZM701.22,246.5L702.22,246.5L741.22,207.5L740.22,207.5ZM706.88,246.5L707.88,246.5L746.88,207.5L745.88,207.5ZM712.54,246.5L713.54,246.5L752.54,207.5L751.54,207.5ZM718.2,246.5L719.2,246.5L758.2,207.5L757.2,207.5ZM723.86,246.5L724.86,246.5L763.86,207.5L762.86,207.5ZM729.52,246.5L730.52,246.5L769.52,207.5L768.52,207.5ZM735.18,246.5L736.18,246.5L775.18,207.5L774.18,207.5ZM740.84,246.5L741.84,246.5L780.84,207.5L779.84,207.5ZM746.5,246.5L747.5,246.5L786.5,207.5L785.5,207.5ZM752.16,246.5L753.16,246.5L792.16,207.5L791.16,207.5ZM757.82,246.5L758.82,246.5L797.82,207.5L796.82,207.5ZM763.48,246.5L764.48,246.5L803.48,207.5L802.48,207.5Z" fill="#00ff00" mask="url(#c18)"/>
<path d="M645.5,183.5L684.5,183.5M684.5,183.5L684.5,199.5M684.5,199.5L675.5,199.5M675.5,199.5L675.5,207.5M675.5,207.5L645.5,207.5M645.5,207.5L645.5,183.5" fill="none" stroke="#ffffff" stroke-width="1" stroke-linecap="square"/>
<path d="M619.82,183.5L620.82,183.5L644.82,207.5L643.82,207.5ZM625.48,183.5L626.48,183.5L650.48,207.5L649.48,207.5ZM631.14,183.5L632.14,183.5L656.14,207.5L655.14,207.5ZM636.8,183.5L637.8,183.5L661.8,207.5L660.8,207.5ZM642.46,183.5L643.46,183.5L667.46,207.5L666.46,207.5ZM648.12,183.5L649.12,183.5L673.12,207.5L672.12,207.5ZM653.78,183.5L654.78,183.5L678.78,207.5L677.78,207.5ZM659.44,183.5L660.44,183.5L684.44,207.5L683.44,207.5ZM665.1,183.5L666.1,183.5L690.1,207.5L689.1,207.5ZM670.76,183.5L671.76,183.5L695.76,207.5L694.76,207.5ZM676.42,183.5L677.42,183.5L701.42,207.5L700.42,207.5ZM682.08,183.5L683.08,183.5L707.08,207.5L706.08,207.5Z" fill="#00ff00" mask="url(#c19)"/>
<path d="M618.92,152.3L619.92,152.3L675.12,207.5L674.12,207.5ZM624.58,152.3L625.58,152.3L680.78,207.5L679.78,207.5ZM630.74,151.8L630.74,152.8L685.94,208L685.94,207ZM636.4,151.8L636.4,152.8L691.6,208L691.6,207ZM641.56,152.3L642.56,152.3L697.76,207.5L696.76,207.5ZM647.22,152.3L648.22,152.3L703.42,207.5L702.42,207.5ZM653.38,151.8L653.38,152.8L708.58,208L708.58,207ZM659.04,151.8L659.04,152.8L714.24,208L714.24,207ZM664.2,152.3L665.2,152.3L720.4,207.5L719.4,207.5ZM670.36,151.8L670.36,152.8L725.56,208L725.56,207ZM675.52,152.3L676.52,152.3L731.72,207.5L730.72,207.5ZM681.68,151.8L681.68,152.8L736.88,208L736.88,207ZM686.84,152.3L687.84,152.3L743.04,207.5L742.04,207.5ZM693,151.8L693,152.8L748.2,208L748.2,207ZM698.16,152.3L699.16,152.3L754.36,207.5L753.36,207.5ZM704.32,151.8L704.32,152.8L759.52,208L759.52,207ZM709.48,152.3L710.48,152.3L765.68,207.5L764.68,207.5ZM715.64,151.8L715.64,152.8L770.84,208L770.84,207ZM720.8,152.3L721.8,152.3L777,207.5L776,207.5ZM726.96,151.8L726.96,152.8L782.16,208L782.16,207ZM732.12,152.3L733.12,152.3L788.32,207.5L787.32,207.5ZM738.28,151.8L738.28,152.8L793.48,208L793.48,207ZM743.44,152.3L744.44,152.3L799.64,207.5L798.64,207.5ZM749.6,151.8L749.6,152.8L804.8,208L804.8,207ZM754.76,152.3L755.76,152.3L810.96,207.5L809.96,207.5ZM760.92,151.8L760.92,152.8L816.12,208L816.12,207Z" fill="#00ff00" mask="url(#c20)"/>
<line x1="675.5" y1="199.5" x2="684.5" y2="199.5" stroke="#ffffff" stroke-width="1"/>
<line x1="684.5" y1="183.5" x2="684.5" y2="199.5" stroke="#ffffff" stroke-width="1"/>
<line x1="675.5" y1="199.5" x2="675.5" y2="207.5" stroke="#ffffff" stroke-width="1"/>
<line x1="675.5" y1="207.5" x2="766.5" y2="207.5" stroke="#ffffff" stroke-width="1"/>
<line x1="675.5" y1="183.5" x2="684.5" y2="183.5" stroke="#ffffff" stroke-width="1"/>
<path d="M583.92,192L584.92,192L641.42,135.5L640.42,135.5ZM589.58,192L590.58,192L647.08,135.5L646.08,135.5ZM595.24,192L596.24,192L652.74,135.5L651.74,135.5ZM600.9,192L601.9,192L658.4,135.5L657.4,135.5ZM606.56,192L607.56,192L664.06,135.5L663.06,135.5ZM612.22,192L613.22,192L669.72,135.5L668.72,135.5ZM617.88,192L618.88,192L675.38,135.5L674.38,135.5ZM623.54,192L624.54,192L681.04,135.5L680.04,135.5ZM629.2,192L630.2,192L686.7,135.5L685.7,135.5ZM634.86,192L635.86,192L692.36,135.5L691.36,135.5ZM640.52,192L641.52,192L698.02,135.5L697.02,135.5ZM646.18,192L647.18,192L703.68,135.5L702.68,135.5ZM651.84,192L652.84,192L709.34,135.5L708.34,135.5ZM657.5,192L658.5,192L715,135.5L714,135.5ZM663.16,192L664.16,192L720.66,135.5L719.66,135.5ZM668.82,192L669.82,192L726.32,135.5L725.32,135.5ZM674.48,192L675.48,192L731.98,135.5L730.98,135.5ZM680.14,192L681.14,192L737.64,135.5L736.64,135.5ZM685.8,192L686.8,192L743.3,135.5L742.3,135.5ZM691.46,192L692.46,192L748.96,135.5L747.96,135.5ZM697.12,192L698.12,192L754.62,135.5L753.62,135.5ZM702.78,192L703.78,192L760.28,135.5L759.28,135.5ZM708.44,192L709.44,192L765.94,135.5L764.94,135.5ZM714.1,192L715.1,192L771.6,135.5L770.6,135.5ZM719.76,192L720.76,192L777.26,135.5L776.26,135.5ZM725.42,192L726.42,192L782.92,135.5L781.92,135.5ZM731.08,192L732.08,192L788.58,135.5L787.58,135.5ZM736.74,192L737.74,192L794.24,135.5L793.24,135.5ZM742.4,192L743.4,192L799.9,135.5L798.9,135.5ZM748.06,192L749.06,192L805.56,135.5L804.56,135.5ZM753.72,192L754.72,192L811.22,135.5L810.22,135.5ZM759.38,192L760.38,192L816.88,135.5L815.88,135.5ZM765.04,192L766.04,192L822.54,135.5L821.54,135.5Z" fill="#00ff00" mask="url(#c21)"/>
<line x1="645.5" y1="135.5" x2="766.5" y2="135.5" stroke="#ffffff" stroke-width="1"/>
<line x1="645.5" y1="135.5" x2="645.5" y2="183.5" stroke="#ffffff" stroke-width="1"/>
<line x1="645.5" y1="183.5" x2="684.5" y2="183.5" stroke="#ffffff" stroke-width="1"/>
<path d="M645.5,105.5L766.5,105.5M766.5,105.5L766.5,135.5M766.5,135.5L645.5,135.5M645.5,135.5L645.5,105.5" fill="none" stroke="#ffffff" stroke-width="1" stroke-linecap="square"/>
<path d="M616.4,105.5L617.4,105.5L647.4,135.5L646.4,135.5ZM622.06,105.5L623.06,105.5L653.06,135.5L652.06,135.5ZM627.72,105.5L628.72,105.5L658.72,135.5L657.72,135.5ZM633.38,105.5L634.38,105.5L664.38,135.5L663.38,135.5ZM639.04,105.5L640.04,105.5L670.04,135.5L669.04,135.5ZM644.7,105.5L645.7,105.5L675.7,135.5L674.7,135.5ZM650.36,105.5L651.36,105.5L681.36,135.5L680.36,135.5ZM656.02,105.5L657.02,105.5L687.02,135.5L686.02,135.5ZM661.68,105.5L662.68,105.5L692.68,135.5L691.68,135.5ZM667.34,105.5L668.34,105.5L698.34,135.5L697.34,135.5ZM673,105.5L674,105.5L704,135.5L703,135.5ZM678.66,105.5L679.66,105.5L709.66,135.5L708.66,135.5ZM684.32,105.5L685.32,105.5L715.32,135.5L714.32,135.5ZM689.98,105.5L690.98,105.5L720.98,135.5L719.98,135.5ZM695.64,105.5L696.64,105.5L726.64,135.5L725.64,135.5ZM701.3,105.5L702.3,105.5L732.3,135.5L731.3,135.5ZM706.96,105.5L707.96,105.5L737.96,135.5L736.96,135.5ZM712.62,105.5L713.62,105.5L743.62,135.5L742.62,135.5ZM718.28,105.5L719.28,105.5L749.28,135.5L748.28,135.5ZM723.94,105.5L724.94,105.5L754.94,135.5L753.94,135.5ZM729.6,105.5L730.6,105.5L760.6,135.5L759.6,135.5ZM735.26,105.5L736.26,105.5L766.26,135.5L765.26,135.5ZM740.92,105.5L741.92,105.5L771.92,135.5L770.92,135.5ZM746.58,105.5L747.58,105.5L777.58,135.5L776.58,135.5ZM752.24,105.5L753.24,105.5L783.24,135.5L782.24,135.5ZM757.9,105.5L758.9,105.5L788.9,135.5L787.9,135.5ZM763.56,105.5L764.56,105.5L794.56,135.5L793.56,135.5Z" fill="#00ff00" mask="url(#c22)"/>
<polygon points="732.5,93.5 758,93.5 764,97 766.5,97 766.5,105.5 732.5,105.5" fill="#000" stroke="none"/>
<path d="M732.5,93.5L758,93.5M764,97L766.5,97M766.5,97L766.5,105.5M766.5,105.5L732.5,105.5M732.5,105.5L732.5,93.5" fill="none" stroke="#ffffff" stroke-width="1" stroke-linecap="square"/>
<path d="M758,93L758,94L764,97.5L764,96.5Z" fill="#ffffff"/>
<path d="M715.7,105.5L716.7,105.5L728.7,93.5L727.7,93.5ZM721.36,105.5L722.36,105.5L734.36,93.5L733.36,93.5ZM727.02,105.5L728.02,105.5L740.02,93.5L739.02,93.5ZM732.68,105.5L733.68,105.5L745.68,93.5L744.68,93.5ZM738.34,105.5L739.34,105.5L751.34,93.5L750.34,93.5ZM744,105.5L745,105.5L757,93.5L756,93.5ZM749.66,105.5L750.66,105.5L762.66,93.5L761.66,93.5ZM755.32,105.5L756.32,105.5L768.32,93.5L767.32,93.5ZM760.98,105.5L761.98,105.5L773.98,93.5L772.98,93.5Z" fill="#00ff00" mask="url(#c23)"/>
<polygon points="756.5,105.5 766.5,105.5 766.5,135.5 756.5,135.5" fill="#000" stroke="none"/>
<path d="M756.5,105.5L766.5,105.5M766.5,105.5L766.5,135.5M766.5,135.5L756.5,135.5M756.5,135.5L756.5,105.5" fill="none" stroke="#ffffff" stroke-width="1" stroke-linecap="square"/>
<path d="M727.32,135.5L728.32,135.5L758.32,105.5L757.32,105.5ZM732.98,135.5L733.98,135.5L763.98,105.5L762.98,105.5ZM738.64,135.5L739.64,135.5L769.64,105.5L768.64,105.5ZM744.3,135.5L745.3,135.5L775.3,105.5L774.3,105.5ZM749.96,135.5L750.96,135.5L780.96,105.5L779.96,105.5ZM755.62,135.5L756.62,135.5L786.62,105.5L785.62,105.5ZM761.28,135.5L762.28,135.5L792.28,105.5L791.28,105.5Z" fill="#00ff00" mask="url(#c24)"/>
<rect x="736.5" y="93.5" width="13.5" height="12" fill="#000" stroke="#ffffff" stroke-width="1"/>
<rect x="739.5" y="105.5" width="7" height="20" fill="#000" stroke="none" stroke-width="1"/>
<path d="M738.5,94.5L748,94.5M749,95.5L749,102.5M749,102.5L737.5,102.5M737.5,102.5L737.5,95.5" fill="none" stroke="#ffffff" stroke-width="1" stroke-linecap="square"/>
<path d="M737,95.5L738,95.5L739,94.5L738,94.5ZM747.5,94.5L748.5,94.5L749.5,95.5L748.5,95.5Z" fill="#ffffff"/>
<line x1="739.5" y1="102.5" x2="739.5" y2="125.5" stroke="#ffffff" stroke-width="1"/>
<line x1="746.5" y1="102.5" x2="746.5" y2="125.5" stroke="#ffffff" stroke-width="1"/>
<line x1="740.5" y1="102.5" x2="740.5" y2="125.5" stroke="#00ff00" stroke-width="1"/>
<line x1="745.5" y1="102.5" x2="745.5" y2="125.5" stroke="#00ff00" stroke-width="1"/>
<polygon points="739.5,125.5 741.5,129.5 744.5,129.5 746.5,125.5" fill="#fff" stroke="none"/>
<path d="M741.5,129.5L744.5,129.5M746.5,125.5L739.5,125.5" fill="none" stroke="#ffffff" stroke-width="1" stroke-linecap="square"/>
<path d="M739,125.5L740,125.5L742,129.5L741,129.5ZM744,129.5L745,129.5L747,125.5L746,125.5Z" fill="#ffffff"/>
<line x1="743.5" y1="90" x2="743.5" y2="131" stroke="#ff0000" stroke-width="1"/>
<polygon points="763,97.5 762,135.5 763,135.5 765,149.5 765,152 766.5,152 766.5,97.5" fill="url(#gd)" stroke="none"/>
<path d="M763,97.5 L762,135.5 M763,135.5 L765,149.5" fill="none" stroke="#ffffff" stroke-width="1" stroke-dasharray="1 2"/>
<path d="M686.5,184.5 L691.5,190.5 Q693.5,192.5 695,190 L695.8,186 L698,162 L700.5,158 L708.5,152.3" fill="none" stroke="#00ff00" stroke-width="2" stroke-linejoin="round"/>
<path d="M686.5,184.5 L691.5,190.5 Q693.5,192.5 695,190 L695.8,186 L698,162 L700.5,158 L708.5,152.3" fill="none" stroke="#ffffff" stroke-width="1" stroke-dasharray="1 2.2" transform="translate(-0.8,-0.6)"/>
<path d="M686.5,184.5 L691.5,190.5 Q693.5,192.5 695,190 L695.8,186 L698,162 L700.5,158 L708.5,152.3" fill="none" stroke="#ffffff" stroke-width="1" stroke-dasharray="1 2.2" transform="translate(0.9,0.7)" stroke-dashoffset="1.5"/>
<path d="M707.5,152.3 L766.5,152.3" fill="none" stroke="#00ff00" stroke-width="3"/>
<path d="M707.5,152.3 L766.5,152.3" fill="none" stroke="#ffffff" stroke-width="1" stroke-dasharray="1 2" transform="translate(0,-1)"/>
<path d="M707.5,152.3 L766.5,152.3" fill="none" stroke="#ffffff" stroke-width="1" stroke-dasharray="1 2" transform="translate(0,1)" stroke-dashoffset="1.5"/>
<rect x="663.5" y="183.5" width="12" height="108" fill="#000" stroke="#ffffff" stroke-width="1"/>
<rect x="660.5" y="291.5" width="20" height="6" fill="#000" stroke="#ffffff" stroke-width="1"/>
<line x1="669.5" y1="179" x2="669.5" y2="301" stroke="#ff0000" stroke-width="1" stroke-dasharray="16 3"/>
<rect x="713.5" y="246.5" width="9" height="32" fill="#000" stroke="#ffffff" stroke-width="1"/>
<line x1="717.5" y1="243" x2="717.5" y2="282" stroke="#ff0000" stroke-width="1"/>
<line x1="766.5" y1="93" x2="766.5" y2="356" stroke="#ff0000" stroke-width="1" stroke-dasharray="40 3 4 3"/>
<line x1="723" y1="93.5" x2="791.5" y2="93.5" stroke="#ff00ff" stroke-width="1"/>
<line x1="790.5" y1="93.5" x2="790.5" y2="352.5" stroke="#ff00ff" stroke-width="1"/>
<line x1="780.5" y1="105.5" x2="780.5" y2="352.5" stroke="#ff00ff" stroke-width="1"/>
<line x1="756.5" y1="105.5" x2="782" y2="105.5" stroke="#ff00ff" stroke-width="1"/>
<line x1="761" y1="135.5" x2="782" y2="135.5" stroke="#ff00ff" stroke-width="1"/>
<line x1="683.5" y1="183.5" x2="782" y2="183.5" stroke="#ff00ff" stroke-width="1"/>
<line x1="766.5" y1="207.5" x2="782" y2="207.5" stroke="#ff00ff" stroke-width="1"/>
<line x1="766.5" y1="246.5" x2="782" y2="246.5" stroke="#ff00ff" stroke-width="1"/>
<line x1="766.5" y1="278.5" x2="782" y2="278.5" stroke="#ff00ff" stroke-width="1"/>
<line x1="766.5" y1="321.5" x2="782" y2="321.5" stroke="#ff00ff" stroke-width="1"/>
<line x1="766.5" y1="352.5" x2="782" y2="352.5" stroke="#ff00ff" stroke-width="1"/>
<line x1="766.5" y1="352.5" x2="792" y2="352.5" stroke="#ff00ff" stroke-width="1"/>
<line x1="772.5" y1="278.5" x2="772.5" y2="321.5" stroke="#ff00ff" stroke-width="1"/>
<line x1="766.5" y1="297.5" x2="774" y2="297.5" stroke="#ff00ff" stroke-width="1"/>
<text x="779.5" y="124" font-family="Liberation Sans" font-size="6.5" fill="#ff00ff" text-anchor="start" textLength="6.5" lengthAdjust="spacingAndGlyphs" font-weight="bold" stroke="#ff00ff" stroke-width="0.4" transform="rotate(-90 779.5 124)">30</text>
<text x="779.5" y="163" font-family="Liberation Sans" font-size="6.5" fill="#ff00ff" text-anchor="start" textLength="3" lengthAdjust="spacingAndGlyphs" font-weight="bold" stroke="#ff00ff" stroke-width="0.4" transform="rotate(-90 779.5 163)">H</text>
<text x="779.5" y="200" font-family="Liberation Sans" font-size="6.5" fill="#ff00ff" text-anchor="start" textLength="6.5" lengthAdjust="spacingAndGlyphs" font-weight="bold" stroke="#ff00ff" stroke-width="0.4" transform="rotate(-90 779.5 200)">30</text>
<text x="779.5" y="230" font-family="Liberation Sans" font-size="6.5" fill="#ff00ff" text-anchor="start" textLength="6.5" lengthAdjust="spacingAndGlyphs" font-weight="bold" stroke="#ff00ff" stroke-width="0.4" transform="rotate(-90 779.5 230)">35</text>
<text x="789.5" y="229" font-family="Liberation Sans" font-size="6.5" fill="#ff00ff" text-anchor="start" textLength="8" lengthAdjust="spacingAndGlyphs" font-weight="bold" stroke="#ff00ff" stroke-width="0.4" transform="rotate(-90 789.5 229)">260</text>
<text x="779.5" y="288" font-family="Liberation Sans" font-size="6.5" fill="#ff00ff" text-anchor="start" textLength="6.5" lengthAdjust="spacingAndGlyphs" font-weight="bold" stroke="#ff00ff" stroke-width="0.4" transform="rotate(-90 779.5 288)">60</text>
<text x="771.5" y="293" font-family="Liberation Sans" font-size="6.5" fill="#ff00ff" text-anchor="start" textLength="6.5" lengthAdjust="spacingAndGlyphs" font-weight="bold" stroke="#ff00ff" stroke-width="0.4" transform="rotate(-90 771.5 293)">25</text>
<text x="771.5" y="314" font-family="Liberation Sans" font-size="6.5" fill="#ff00ff" text-anchor="start" textLength="6.5" lengthAdjust="spacingAndGlyphs" font-weight="bold" stroke="#ff00ff" stroke-width="0.4" transform="rotate(-90 771.5 314)">30</text>
<text x="779.5" y="341" font-family="Liberation Sans" font-size="6.5" fill="#ff00ff" text-anchor="start" textLength="6.5" lengthAdjust="spacingAndGlyphs" font-weight="bold" stroke="#ff00ff" stroke-width="0.4" transform="rotate(-90 779.5 341)">35</text>
<line x1="644" y1="203.5" x2="675.5" y2="203.5" stroke="#ff00ff" stroke-width="1"/>
<text x="630.5" y="203" font-family="Liberation Sans" font-size="6.5" fill="#ff00ff" text-anchor="start" textLength="13.5" lengthAdjust="spacingAndGlyphs" font-weight="bold" stroke="#ff00ff" stroke-width="0.4">ø12</text>
<text x="751" y="90" font-family="Liberation Sans" font-size="7" fill="#00ff00" text-anchor="start" textLength="12.5" lengthAdjust="spacingAndGlyphs" font-weight="bold" stroke="#00ff00" stroke-width="0.4">B–B</text>
<path d="M588.5,206.7L589,205.5L590.6,205.5L591.1,206.7L591.1,208L588.5,211.7L591.1,211.7M592.5,206.4L593,205.5L594.6,205.5L595.1,206.4L595.1,210.8L594.6,211.7L593,211.7L592.5,210.8L592.5,206.4" fill="none" stroke="#ffffff" stroke-width="1" stroke-linejoin="round"/>
<line x1="586.5" y1="214.5" x2="599.8" y2="214.5" stroke="#ffffff" stroke-width="1"/>
<path d="M599.8,214L599.8,215L670.2,251.2L670.2,250.2Z" fill="#ffffff"/>
<rect x="669.7" y="250.2" width="1" height="1" fill="#fff" stroke="#ffffff" stroke-width="1"/>
<rect x="209.5" y="432.5" width="300" height="240" fill="none" stroke="#ffffff" stroke-width="1"/>
<line x1="239.5" y1="432.5" x2="239.5" y2="672.5" stroke="#0000ff" stroke-width="1" stroke-dasharray="6 3"/>
<line x1="288" y1="432.5" x2="288" y2="672.5" stroke="#0000ff" stroke-width="2" stroke-dasharray="4 2"/>
<line x1="431" y1="432.5" x2="431" y2="672.5" stroke="#0000ff" stroke-width="2" stroke-dasharray="4 2"/>
<line x1="479.5" y1="432.5" x2="479.5" y2="672.5" stroke="#0000ff" stroke-width="1" stroke-dasharray="6 3"/>
<circle cx="265.5" cy="458.5" r="12" fill="none" stroke="#ffffff" stroke-width="1"/>
<line x1="251" y1="458.5" x2="280" y2="458.5" stroke="#ff0000" stroke-width="1"/>
<line x1="265.5" y1="444" x2="265.5" y2="473" stroke="#ff0000" stroke-width="1"/>
<circle cx="265.5" cy="646.5" r="12" fill="none" stroke="#ffffff" stroke-width="1"/>
<line x1="251" y1="646.5" x2="280" y2="646.5" stroke="#ff0000" stroke-width="1"/>
<line x1="265.5" y1="632" x2="265.5" y2="661" stroke="#ff0000" stroke-width="1"/>
<circle cx="453.5" cy="458.5" r="15.3" fill="none" stroke="#ffffff" stroke-width="1"/>
<circle cx="453.5" cy="458.5" r="12.6" fill="none" stroke="#ffffff" stroke-width="1"/>
<line x1="436" y1="458.5" x2="471" y2="458.5" stroke="#ff0000" stroke-width="1"/>
<line x1="453.5" y1="441" x2="453.5" y2="476" stroke="#ff0000" stroke-width="1"/>
<circle cx="453.5" cy="646.5" r="15.3" fill="none" stroke="#ffffff" stroke-width="1"/>
<circle cx="453.5" cy="646.5" r="12.6" fill="none" stroke="#ffffff" stroke-width="1"/>
<line x1="436" y1="646.5" x2="471" y2="646.5" stroke="#ff0000" stroke-width="1"/>
<line x1="453.5" y1="629" x2="453.5" y2="664" stroke="#ff0000" stroke-width="1"/>
<circle cx="263.5" cy="494.5" r="6.6" fill="none" stroke="#ffffff" stroke-width="2"/>
<line x1="253.5" y1="494.5" x2="273.5" y2="494.5" stroke="#ff0000" stroke-width="1"/>
<line x1="263.5" y1="484.5" x2="263.5" y2="504.5" stroke="#ff0000" stroke-width="1"/>
<circle cx="263.5" cy="610.5" r="6.6" fill="none" stroke="#ffffff" stroke-width="2"/>
<line x1="253.5" y1="610.5" x2="273.5" y2="610.5" stroke="#ff0000" stroke-width="1"/>
<line x1="263.5" y1="600.5" x2="263.5" y2="620.5" stroke="#ff0000" stroke-width="1"/>
<circle cx="455.5" cy="494.5" r="6.6" fill="none" stroke="#ffffff" stroke-width="2"/>
<line x1="445.5" y1="494.5" x2="465.5" y2="494.5" stroke="#ff0000" stroke-width="1"/>
<line x1="455.5" y1="484.5" x2="455.5" y2="504.5" stroke="#ff0000" stroke-width="1"/>
<circle cx="455.5" cy="610.5" r="6.6" fill="none" stroke="#ffffff" stroke-width="2"/>
<line x1="445.5" y1="610.5" x2="465.5" y2="610.5" stroke="#ff0000" stroke-width="1"/>
<line x1="455.5" y1="600.5" x2="455.5" y2="620.5" stroke="#ff0000" stroke-width="1"/>
<circle cx="263.5" cy="552.5" r="5" fill="none" stroke="#ffffff" stroke-width="1"/>
<line x1="257" y1="552.5" x2="270" y2="552.5" stroke="#ff0000" stroke-width="1"/>
<line x1="263.5" y1="546" x2="263.5" y2="559" stroke="#ff0000" stroke-width="1"/>
<circle cx="455.5" cy="552.5" r="5" fill="none" stroke="#ffffff" stroke-width="1"/>
<line x1="449" y1="552.5" x2="462" y2="552.5" stroke="#ff0000" stroke-width="1"/>
<line x1="455.5" y1="546" x2="455.5" y2="559" stroke="#ff0000" stroke-width="1"/>
<circle cx="299.5" cy="443.5" r="5" fill="none" stroke="#0000ff" stroke-width="1" stroke-dasharray="5 2.5"/>
<line x1="292" y1="443.5" x2="307" y2="443.5" stroke="#ff0000" stroke-width="1"/>
<line x1="299.5" y1="436" x2="299.5" y2="451" stroke="#ff0000" stroke-width="1"/>
<circle cx="419.5" cy="443.5" r="5" fill="none" stroke="#0000ff" stroke-width="1" stroke-dasharray="5 2.5"/>
<line x1="412" y1="443.5" x2="427" y2="443.5" stroke="#ff0000" stroke-width="1"/>
<line x1="419.5" y1="436" x2="419.5" y2="451" stroke="#ff0000" stroke-width="1"/>
<circle cx="299.5" cy="661.5" r="5" fill="none" stroke="#0000ff" stroke-width="1" stroke-dasharray="5 2.5"/>
<line x1="292" y1="661.5" x2="307" y2="661.5" stroke="#ff0000" stroke-width="1"/>
<line x1="299.5" y1="654" x2="299.5" y2="669" stroke="#ff0000" stroke-width="1"/>
<circle cx="419.5" cy="661.5" r="5" fill="none" stroke="#0000ff" stroke-width="1" stroke-dasharray="5 2.5"/>
<line x1="412" y1="661.5" x2="427" y2="661.5" stroke="#ff0000" stroke-width="1"/>
<line x1="419.5" y1="654" x2="419.5" y2="669" stroke="#ff0000" stroke-width="1"/>
<circle cx="359.5" cy="456.5" r="6" fill="none" stroke="#0000ff" stroke-width="1" stroke-dasharray="4 2.5"/>
<line x1="351.5" y1="456.5" x2="367.5" y2="456.5" stroke="#ff0000" stroke-width="1"/>
<line x1="359.5" y1="448.5" x2="359.5" y2="464.5" stroke="#ff0000" stroke-width="1"/>
<circle cx="359.5" cy="647.5" r="6" fill="none" stroke="#0000ff" stroke-width="1" stroke-dasharray="4 2.5"/>
<line x1="351.5" y1="647.5" x2="367.5" y2="647.5" stroke="#ff0000" stroke-width="1"/>
<line x1="359.5" y1="639.5" x2="359.5" y2="655.5" stroke="#ff0000" stroke-width="1"/>
<circle cx="389.5" cy="504.5" r="6" fill="none" stroke="#0000ff" stroke-width="1" stroke-dasharray="4 2.5"/>
<line x1="381.5" y1="504.5" x2="397.5" y2="504.5" stroke="#ff0000" stroke-width="1"/>
<line x1="389.5" y1="496.5" x2="389.5" y2="512.5" stroke="#ff0000" stroke-width="1"/>
<circle cx="389.5" cy="600.5" r="6" fill="none" stroke="#0000ff" stroke-width="1" stroke-dasharray="4 2.5"/>
<line x1="381.5" y1="600.5" x2="397.5" y2="600.5" stroke="#ff0000" stroke-width="1"/>
<line x1="389.5" y1="592.5" x2="389.5" y2="608.5" stroke="#ff0000" stroke-width="1"/>
<circle cx="329.5" cy="504.5" r="6.5" fill="none" stroke="#ffffff" stroke-width="1"/>
<line x1="321.5" y1="504.5" x2="337.5" y2="504.5" stroke="#ff0000" stroke-width="1"/>
<line x1="329.5" y1="496.5" x2="329.5" y2="512.5" stroke="#ff0000" stroke-width="1"/>
<circle cx="329.5" cy="600.5" r="6.5" fill="none" stroke="#ffffff" stroke-width="1"/>
<line x1="321.5" y1="600.5" x2="337.5" y2="600.5" stroke="#ff0000" stroke-width="1"/>
<line x1="329.5" y1="592.5" x2="329.5" y2="608.5" stroke="#ff0000" stroke-width="1"/>
<path d="M359.5,471.5 C330,474 297,500 296,540 L296,566 C297,606 330,631 359.5,633.5" fill="none" stroke="#ffffff" stroke-width="1"/>
<path d="M359.5,519.5 A33,33 0 0 1 359.5,585.5" fill="none" stroke="#ffffff" stroke-width="1"/>
<path d="M359.5,541.5 A11,11 0 0 1 359.5,563.5" fill="none" stroke="#ffffff" stroke-width="1"/>
<path d="M359.5,523 A6.5,6.5 0 0 1 359.5,536" fill="none" stroke="#ffffff" stroke-width="1"/>
<path d="M359.5,568 A6.5,6.5 0 0 1 359.5,581" fill="none" stroke="#ffffff" stroke-width="1"/>
<circle cx="382.3" cy="552.5" r="6.5" fill="none" stroke="#ffffff" stroke-width="1"/>
<line x1="360.5" y1="519.5" x2="360.5" y2="585.5" stroke="#ffffff" stroke-width="1"/>
<circle cx="359.5" cy="552.5" r="23" fill="none" stroke="#ff0000" stroke-width="1" stroke-dasharray="12 2 2 2"/>
<line x1="375.3" y1="551.5" x2="389.3" y2="551.5" stroke="#ff0000" stroke-width="1"/>
<line x1="382.3" y1="544.5" x2="382.3" y2="558.5" stroke="#ff0000" stroke-width="1"/>
<path d="M278.5,458.5L285.5,458.5M285.5,458.5L285.5,453" fill="none" stroke="#00ffff" stroke-width="1" stroke-linecap="square"/>
<path d="M285.5,448L285.5,443.5M285.5,443.5L291.5,443.5" fill="none" stroke="#00ffff" stroke-width="1" stroke-linecap="square"/>
<path d="M306.5,443.5L311.5,443.5M311.5,443.5L311.5,447" fill="none" stroke="#00ffff" stroke-width="1" stroke-linecap="square"/>
<path d="M311.5,496.5L311.5,504.5M311.5,504.5L318.5,504.5" fill="none" stroke="#00ffff" stroke-width="1" stroke-linecap="square"/>
<path d="M339.5,504.5L347.5,504.5M347.5,504.5L347.5,512.5" fill="none" stroke="#00ffff" stroke-width="1" stroke-linecap="square"/>
<path d="M347.5,544.5L347.5,552.5M347.5,552.5L355,552.5" fill="none" stroke="#00ffff" stroke-width="1" stroke-linecap="square"/>
<path d="M397.5,552.5L405.5,552.5M405.5,552.5L405.5,561.5" fill="none" stroke="#00ffff" stroke-width="1" stroke-linecap="square"/>
<path d="M398.5,585.5L405.5,585.5M405.5,585.5L405.5,579" fill="none" stroke="#00ffff" stroke-width="1" stroke-linecap="square"/>
<path d="M380,585.5L374.5,585.5M374.5,585.5L374.5,600.5M374.5,600.5L381.5,600.5" fill="none" stroke="#00ffff" stroke-width="1" stroke-linecap="square"/>
<line x1="422" y1="610.5" x2="431" y2="610.5" stroke="#00ffff" stroke-width="1"/>
<line x1="513.5" y1="610.5" x2="520" y2="610.5" stroke="#00ffff" stroke-width="1"/>
<line x1="191" y1="458.5" x2="198" y2="458.5" stroke="#00ffff" stroke-width="1"/>
<line x1="359.5" y1="425.5" x2="359.5" y2="430" stroke="#00ffff" stroke-width="1"/>
<line x1="359.5" y1="682.5" x2="359.5" y2="690" stroke="#00ffff" stroke-width="1"/>
<text x="186" y="461" font-family="Liberation Sans" font-size="6.5" fill="#00ff00" text-anchor="middle" textLength="4.5" lengthAdjust="spacingAndGlyphs" font-weight="bold" stroke="#00ff00" stroke-width="0.4">A</text>
<text x="522" y="612" font-family="Liberation Sans" font-size="6.5" fill="#00ff00" text-anchor="middle" textLength="4.5" lengthAdjust="spacingAndGlyphs" font-weight="bold" stroke="#00ff00" stroke-width="0.4">A</text>
<text x="360" y="424.2" font-family="Liberation Sans" font-size="6.5" fill="#00ff00" text-anchor="middle" textLength="4.5" lengthAdjust="spacingAndGlyphs" font-weight="bold" stroke="#00ff00" stroke-width="0.4" transform="rotate(-90 360 422)">B</text>
<text x="360.5" y="696.2" font-family="Liberation Sans" font-size="6.5" fill="#00ff00" text-anchor="middle" textLength="4.5" lengthAdjust="spacingAndGlyphs" font-weight="bold" stroke="#00ff00" stroke-width="0.4" transform="rotate(-90 360.5 694)">B</text>
<line x1="205.5" y1="552.5" x2="512.5" y2="552.5" stroke="#ff0000" stroke-width="1" stroke-dasharray="30 3 4 3"/>
<line x1="359.5" y1="430" x2="359.5" y2="678" stroke="#ff0000" stroke-width="1" stroke-dasharray="30 3 4 3"/>
<line x1="209.5" y1="414.5" x2="509.5" y2="414.5" stroke="#ff00ff" stroke-width="1"/>
<line x1="209.5" y1="412" x2="209.5" y2="432.5" stroke="#ff00ff" stroke-width="1"/>
<line x1="509.5" y1="412" x2="509.5" y2="432.5" stroke="#ff00ff" stroke-width="1"/>
<text x="355" y="414" font-family="Liberation Sans" font-size="5.5" fill="#ff00ff" text-anchor="start" textLength="9" lengthAdjust="spacingAndGlyphs" font-weight="bold" stroke="#ff00ff" stroke-width="0.4">300</text>
<line x1="509.5" y1="432.5" x2="525.5" y2="432.5" stroke="#ff00ff" stroke-width="1"/>
<line x1="509.5" y1="672.5" x2="525.5" y2="672.5" stroke="#ff00ff" stroke-width="1"/>
<line x1="524.5" y1="432.5" x2="524.5" y2="672.5" stroke="#ff00ff" stroke-width="1"/>
<text x="523.5" y="555" font-family="Liberation Sans" font-size="6.5" fill="#ff00ff" text-anchor="start" textLength="8" lengthAdjust="spacingAndGlyphs" font-weight="bold" stroke="#ff00ff" stroke-width="0.4" transform="rotate(-90 523.5 555)">240</text>
<line x1="366.5" y1="456.5" x2="422.5" y2="456.5" stroke="#ff00ff" stroke-width="1"/>
<line x1="366.5" y1="647.5" x2="422.5" y2="647.5" stroke="#ff00ff" stroke-width="1"/>
<line x1="421.5" y1="456.5" x2="421.5" y2="647.5" stroke="#ff00ff" stroke-width="1"/>
<text x="420.5" y="544" font-family="Liberation Sans" font-size="6.5" fill="#ff00ff" text-anchor="start" textLength="7.5" lengthAdjust="spacingAndGlyphs" font-weight="bold" stroke="#ff00ff" stroke-width="0.4" transform="rotate(-90 420.5 544)">143</text>
<line x1="396" y1="504.5" x2="415.5" y2="504.5" stroke="#ff00ff" stroke-width="1"/>
<line x1="396" y1="600.5" x2="415.5" y2="600.5" stroke="#ff00ff" stroke-width="1"/>
<line x1="413.5" y1="504.5" x2="413.5" y2="600.5" stroke="#ff00ff" stroke-width="1"/>
<text x="412.5" y="556" font-family="Liberation Sans" font-size="6.5" fill="#ff00ff" text-anchor="start" textLength="6" lengthAdjust="spacingAndGlyphs" font-weight="bold" stroke="#ff00ff" stroke-width="0.4" transform="rotate(-90 412.5 556)">96</text>
<line x1="329.5" y1="482.5" x2="389.5" y2="482.5" stroke="#ff00ff" stroke-width="1"/>
<line x1="329.5" y1="482.5" x2="329.5" y2="498" stroke="#ff00ff" stroke-width="1"/>
<line x1="389.5" y1="482.5" x2="389.5" y2="498" stroke="#ff00ff" stroke-width="1"/>
<text x="356" y="481.5" font-family="Liberation Sans" font-size="6.5" fill="#ff00ff" text-anchor="start" textLength="6.5" lengthAdjust="spacingAndGlyphs" font-weight="bold" stroke="#ff00ff" stroke-width="0.4">60</text>
<line x1="792.5" y1="455.5" x2="1008.5" y2="455.5" stroke="#ffffff" stroke-width="1"/>
<line x1="792.5" y1="464.5" x2="1008.5" y2="464.5" stroke="#ffffff" stroke-width="1"/>
<line x1="792.5" y1="474.5" x2="1008.5" y2="474.5" stroke="#ffffff" stroke-width="1"/>
<line x1="792.5" y1="484.5" x2="1008.5" y2="484.5" stroke="#ffffff" stroke-width="1"/>
<line x1="792.5" y1="493.5" x2="1008.5" y2="493.5" stroke="#ffffff" stroke-width="1"/>
<line x1="792.5" y1="503.5" x2="1008.5" y2="503.5" stroke="#ffffff" stroke-width="1"/>
<line x1="792.5" y1="512.5" x2="1008.5" y2="512.5" stroke="#ffffff" stroke-width="1"/>
<line x1="792.5" y1="522.5" x2="1008.5" y2="522.5" stroke="#ffffff" stroke-width="1"/>
<line x1="792.5" y1="532.5" x2="1008.5" y2="532.5" stroke="#ffffff" stroke-width="1"/>
<line x1="792.5" y1="541.5" x2="1008.5" y2="541.5" stroke="#ffffff" stroke-width="1"/>
<line x1="792.5" y1="551.5" x2="1008.5" y2="551.5" stroke="#ffffff" stroke-width="1"/>
<line x1="792.5" y1="560.5" x2="1008.5" y2="560.5" stroke="#ffffff" stroke-width="1"/>
<line x1="792.5" y1="570.5" x2="1008.5" y2="570.5" stroke="#ffffff" stroke-width="1"/>
<line x1="792.5" y1="580.5" x2="1008.5" y2="580.5" stroke="#ffffff" stroke-width="1"/>
<line x1="792.5" y1="589.5" x2="1008.5" y2="589.5" stroke="#ffffff" stroke-width="1"/>
<line x1="792.5" y1="599.5" x2="1008.5" y2="599.5" stroke="#ffffff" stroke-width="1"/>
<line x1="792.5" y1="608.5" x2="1008.5" y2="608.5" stroke="#ffffff" stroke-width="1"/>
<line x1="792.5" y1="618.5" x2="1008.5" y2="618.5" stroke="#ffffff" stroke-width="1"/>
<line x1="792.5" y1="628.5" x2="1008.5" y2="628.5" stroke="#ffffff" stroke-width="1"/>
<line x1="792.5" y1="637.5" x2="1008.5" y2="637.5" stroke="#ffffff" stroke-width="1"/>
<line x1="792.5" y1="647.5" x2="1008.5" y2="647.5" stroke="#ffffff" stroke-width="1"/>
<line x1="792.5" y1="657.5" x2="1008.5" y2="657.5" stroke="#ffffff" stroke-width="1"/>
<line x1="792.5" y1="455.5" x2="792.5" y2="657.5" stroke="#ffffff" stroke-width="1"/>
<line x1="810.5" y1="455.5" x2="810.5" y2="657.5" stroke="#ffffff" stroke-width="1"/>
<line x1="852.5" y1="455.5" x2="852.5" y2="657.5" stroke="#ffffff" stroke-width="1"/>
<line x1="864.5" y1="455.5" x2="864.5" y2="657.5" stroke="#ffffff" stroke-width="1"/>
<line x1="900.5" y1="455.5" x2="900.5" y2="657.5" stroke="#ffffff" stroke-width="1"/>
<line x1="939.5" y1="455.5" x2="939.5" y2="657.5" stroke="#ffffff" stroke-width="1"/>
<path d="M796.5,458.7L797.3,457.5L799.7,457.5L800.5,458.7L800.5,459.9L796.5,463.5L800.5,463.5M802.5,458.4L803.3,457.5L805.7,457.5L806.5,458.4L806.5,462.6L805.7,463.5L803.3,463.5L802.5,462.6L802.5,458.4" fill="none" stroke="#ffffff" stroke-width="1" stroke-linejoin="round"/>
<path d="M821,460.5H827.2M821,457.5H827.2M823,456.5H827.2M821,461.5H826.2M821.5,456V462.5M825.5,456V462.5M823.5,457V461.5" stroke="#fff" stroke-width="1" fill="none" opacity="0.8"/>
<path d="M834,460.5H838.2M835,461.5H837.2M834,456.5H837.2M834,458.5H839.2M836.5,458V462.5M835.5,458V462.5M834.5,458V462.5" stroke="#fff" stroke-width="1" fill="none" opacity="0.8"/>
<path d="M856.5,458.7L857.3,457.5L859.7,457.5L860.5,458.7L860.5,459.9L856.5,463.5L860.5,463.5" fill="none" stroke="#ffffff" stroke-width="1" stroke-linejoin="round"/>
<text x="873" y="461.5" font-family="Liberation Sans" font-size="7" fill="#ffffff" text-anchor="start" textLength="10.5" lengthAdjust="spacingAndGlyphs" stroke="#fff" stroke-width="0.3">45#</text>
<text x="905.5" y="461.5" font-family="Liberation Sans" font-size="7" fill="#ffffff" text-anchor="start" textLength="33" lengthAdjust="spacingAndGlyphs" stroke="#fff" stroke-width="0.3">40–45HRC</text>
<path d="M797.5,468.7L798.7,467.5L798.7,473.5M801.9,473.2L802.5,473.5L804.5,473.5L805.5,472.3L805.5,468.4L804.7,467.5L802.3,467.5L801.5,468.4L801.5,469.9L802.3,470.8L805.5,470.8" fill="none" stroke="#ffffff" stroke-width="1" stroke-linejoin="round"/>
<text x="811.5" y="471.5" font-family="Liberation Sans" font-size="6.5" fill="#ffffff" text-anchor="start" textLength="10" lengthAdjust="spacingAndGlyphs">M12</text>
<path d="M822,470.5H827.2M823,469.5H827.2M823,467.5H825.2M822,471.5H825.2M822.5,466V471M825.5,468V472M823.5,466V472" stroke="#fff" stroke-width="1" fill="none" opacity="0.8"/>
<path d="M828,466.5H833.2M828,468.5H831.2M828,469.5H831.2M830,470.5H833.2M832.5,468V472M829.5,466V471M828.5,466V472" stroke="#fff" stroke-width="1" fill="none" opacity="0.8"/>
<path d="M836,466.5H839.2M834,471.5H838.2M834,469.5H839.2M834,468.5H838.2M835.5,466V471M834.5,466V472M837.5,466V471" stroke="#fff" stroke-width="1" fill="none" opacity="0.8"/>
<path d="M842,466.5H845.2M842,472.5H845.2M840,468.5H845.2M842,467.5H843.2M842.5,466V472M840.5,467V472M843.5,466V472" stroke="#fff" stroke-width="1" fill="none" opacity="0.8"/>
<path d="M847,471.5H851.2M846,468.5H851.2M847,470.5H851.2M847,466.5H851.2M849.5,468V472M847.5,467V471M846.5,468V472" stroke="#fff" stroke-width="1" fill="none" opacity="0.8"/>
<path d="M859.5,473.5L859.5,467.5L856.5,471.7L860.5,471.7" fill="none" stroke="#ffffff" stroke-width="1" stroke-linejoin="round"/>
<text x="873" y="471.5" font-family="Liberation Sans" font-size="7" fill="#ffffff" text-anchor="start" textLength="10.5" lengthAdjust="spacingAndGlyphs" stroke="#fff" stroke-width="0.3">45#</text>
<text x="905.5" y="471.5" font-family="Liberation Sans" font-size="7" fill="#ffffff" text-anchor="start" textLength="33" lengthAdjust="spacingAndGlyphs" stroke="#fff" stroke-width="0.3">43–48HRC</text>
<text x="974" y="471.5" font-family="Liberation Sans" font-size="7" fill="#ffffff" text-anchor="middle" textLength="28" lengthAdjust="spacingAndGlyphs" stroke="#fff" stroke-width="0.3">GB70–85</text>
<path d="M797.5,478.7L798.7,477.5L798.7,483.5M802.3,477.5L804.7,477.5L805.5,478.2L805.5,479.6L804.7,480.3L802.3,480.3L801.5,479.6L801.5,478.2L802.3,477.5M802.3,480.3L801.5,481.1L801.5,482.6L802.3,483.5L804.7,483.5L805.5,482.6L805.5,481.1L804.7,480.3" fill="none" stroke="#ffffff" stroke-width="1" stroke-linejoin="round"/>
<path d="M823,482.5H826.2M822,477.5H827.2M821,481.5H825.2M822,479.5H827.2M826.5,476V482.5M822.5,476V482.5M823.5,478V481.5" stroke="#fff" stroke-width="1" fill="none" opacity="0.8"/>
<path d="M835,479.5H837.2M833,478.5H838.2M835,480.5H837.2M835,481.5H839.2M834.5,476V482.5M833.5,476V482.5M835.5,476V482.5" stroke="#fff" stroke-width="1" fill="none" opacity="0.8"/>
<path d="M856.5,478.7L857.3,477.5L859.7,477.5L860.5,478.7L860.5,479.9L856.5,483.5L860.5,483.5" fill="none" stroke="#ffffff" stroke-width="1" stroke-linejoin="round"/>
<text x="870.5" y="481.5" font-family="Liberation Sans" font-size="7" fill="#ffffff" text-anchor="start" textLength="23" lengthAdjust="spacingAndGlyphs" stroke="#fff" stroke-width="0.3">Q235A#</text>
<path d="M797.5,487.7L798.7,486.5L798.7,492.5M801.5,486.5L805.5,486.5L802.9,492.5" fill="none" stroke="#ffffff" stroke-width="1" stroke-linejoin="round"/>
<path d="M821,488.5H824.4M822,489.5H825.4M823,491.5H826.4M821,485.5H826.4M822.5,487V490.5M821.5,485V490.5M823.5,485V490.5" stroke="#fff" stroke-width="1" fill="none" opacity="0.8"/>
<path d="M827,485.5H832.4M827,490.5H832.4M827,486.5H830.4M827,489.5H830.4M827.5,486V491.5M829.5,485V491.5M832.5,485V490.5" stroke="#fff" stroke-width="1" fill="none" opacity="0.8"/>
<path d="M835,486.5H838.4M835,485.5H838.4M833,488.5H837.4M835,491.5H837.4M835.5,487V490.5M837.5,485V491.5M836.5,487V491.5" stroke="#fff" stroke-width="1" fill="none" opacity="0.8"/>
<path d="M857.5,487.7L858.7,486.5L858.7,492.5" fill="none" stroke="#ffffff" stroke-width="1" stroke-linejoin="round"/>
<text x="873" y="490.5" font-family="Liberation Sans" font-size="7" fill="#ffffff" text-anchor="start" textLength="10.5" lengthAdjust="spacingAndGlyphs" stroke="#fff" stroke-width="0.3">45#</text>
<text x="905.5" y="490.5" font-family="Liberation Sans" font-size="7" fill="#ffffff" text-anchor="start" textLength="33" lengthAdjust="spacingAndGlyphs" stroke="#fff" stroke-width="0.3">40–45HRC</text>
<path d="M797.5,497.7L798.7,496.5L798.7,502.5M805.1,496.8L804.5,496.5L802.5,496.5L801.5,497.7L801.5,501.6L802.3,502.5L804.7,502.5L805.5,501.6L805.5,500.1L804.7,499.2L801.5,499.2" fill="none" stroke="#ffffff" stroke-width="1" stroke-linejoin="round"/>
<path d="M816,497.5H819.3M815,495.5H819.3M816,498.5H818.3M815,501.5H819.3M817.5,495V501.5M816.5,496V501.5M815.5,497V500.5" stroke="#fff" stroke-width="1" fill="none" opacity="0.8"/>
<path d="M823,500.5H826.3M821,499.5H824.3M821,497.5H826.3M823,495.5H826.3M824.5,495V500.5M821.5,497V501.5M823.5,495V501.5" stroke="#fff" stroke-width="1" fill="none" opacity="0.8"/>
<path d="M827,496.5H830.3M827,495.5H830.3M827,498.5H830.3M827,497.5H832.3M831.5,495V500.5M829.5,495V500.5M832.5,496V501.5" stroke="#fff" stroke-width="1" fill="none" opacity="0.8"/>
<path d="M834,499.5H838.3M835,496.5H838.3M835,495.5H838.3M833,498.5H838.3M834.5,496V501.5M836.5,495V500.5M833.5,495V501.5" stroke="#fff" stroke-width="1" fill="none" opacity="0.8"/>
<path d="M841,497.5H844.3M839,498.5H844.3M840,499.5H844.3M839,496.5H842.3M843.5,495V501.5M841.5,495V501.5M839.5,495V501.5" stroke="#fff" stroke-width="1" fill="none" opacity="0.8"/>
<path d="M857.5,497.7L858.7,496.5L858.7,502.5" fill="none" stroke="#ffffff" stroke-width="1" stroke-linejoin="round"/>
<text x="873" y="500.5" font-family="Liberation Sans" font-size="7" fill="#ffffff" text-anchor="start" textLength="10.5" lengthAdjust="spacingAndGlyphs" stroke="#fff" stroke-width="0.3">45#</text>
<text x="905.5" y="500.5" font-family="Liberation Sans" font-size="7" fill="#ffffff" text-anchor="start" textLength="33" lengthAdjust="spacingAndGlyphs" stroke="#fff" stroke-width="0.3">40–45HRC</text>
<path d="M797.5,506.7L798.7,505.5L798.7,511.5M805.5,505.5L801.5,505.5L801.5,508.2L804.5,508.2L805.5,509.1L805.5,510.6L804.7,511.5L802.3,511.5L801.5,510.6" fill="none" stroke="#ffffff" stroke-width="1" stroke-linejoin="round"/>
<path d="M821,504.5H825.2M823,509.5H825.2M823,510.5H827.2M821,506.5H827.2M823.5,504V509.5M821.5,505V510.5M826.5,506V510.5" stroke="#fff" stroke-width="1" fill="none" opacity="0.8"/>
<path d="M833,505.5H838.2M833,507.5H837.2M835,508.5H837.2M834,510.5H838.2M834.5,505V509.5M838.5,504V509.5M835.5,504V510.5" stroke="#fff" stroke-width="1" fill="none" opacity="0.8"/>
<path d="M857.5,506.7L858.7,505.5L858.7,511.5" fill="none" stroke="#ffffff" stroke-width="1" stroke-linejoin="round"/>
<text x="873" y="509.5" font-family="Liberation Sans" font-size="7" fill="#ffffff" text-anchor="start" textLength="10.5" lengthAdjust="spacingAndGlyphs" stroke="#fff" stroke-width="0.3">45#</text>
<text x="905.5" y="509.5" font-family="Liberation Sans" font-size="7" fill="#ffffff" text-anchor="start" textLength="33" lengthAdjust="spacingAndGlyphs" stroke="#fff" stroke-width="0.3">40–45HRC</text>
<path d="M797.5,516.7L798.7,515.5L798.7,521.5M804.5,521.5L804.5,515.5L801.5,519.7L805.5,519.7" fill="none" stroke="#ffffff" stroke-width="1" stroke-linejoin="round"/>
<path d="M821,520.5H826.2M823,515.5H825.2M822,517.5H826.2M821,514.5H827.2M823.5,514V520.5M822.5,514V520.5M824.5,514V520.5" stroke="#fff" stroke-width="1" fill="none" opacity="0.8"/>
<path d="M835,517.5H837.2M833,520.5H837.2M834,516.5H839.2M833,519.5H839.2M834.5,514V520.5M836.5,514V519.5M833.5,515V520.5" stroke="#fff" stroke-width="1" fill="none" opacity="0.8"/>
<path d="M857.5,516.7L858.7,515.5L858.7,521.5" fill="none" stroke="#ffffff" stroke-width="1" stroke-linejoin="round"/>
<text x="873" y="519.5" font-family="Liberation Sans" font-size="7" fill="#ffffff" text-anchor="start" textLength="10.5" lengthAdjust="spacingAndGlyphs" stroke="#fff" stroke-width="0.3">45#</text>
<text x="905.5" y="519.5" font-family="Liberation Sans" font-size="7" fill="#ffffff" text-anchor="start" textLength="33" lengthAdjust="spacingAndGlyphs" stroke="#fff" stroke-width="0.3">40–45HRC</text>
<path d="M797.5,526.7L798.7,525.5L798.7,531.5M801.5,526.4L802.3,525.5L804.7,525.5L805.5,526.4L805.5,527.6L804.7,528.4L803.1,528.4M804.7,528.4L805.5,529.2L805.5,530.6L804.7,531.5L802.3,531.5L801.5,530.6" fill="none" stroke="#ffffff" stroke-width="1" stroke-linejoin="round"/>
<path d="M817,529.5H822.4M817,526.5H822.4M818,528.5H822.4M819,527.5H822.4M817.5,525V530.5M818.5,524V530.5M820.5,525V530.5" stroke="#fff" stroke-width="1" fill="none" opacity="0.8"/>
<path d="M825,529.5H828.4M825,527.5H828.4M825,525.5H828.4M825,526.5H828.4M826.5,526V530.5M827.5,524V529.5M825.5,525V530.5" stroke="#fff" stroke-width="1" fill="none" opacity="0.8"/>
<path d="M829,530.5H832.4M831,524.5H832.4M829,529.5H834.4M829,526.5H834.4M829.5,525V530.5M834.5,524V530.5M830.5,525V530.5" stroke="#fff" stroke-width="1" fill="none" opacity="0.8"/>
<path d="M836,526.5H839.4M837,530.5H838.4M836,528.5H840.4M835,529.5H840.4M840.5,525V529.5M835.5,525V530.5M839.5,524V529.5" stroke="#fff" stroke-width="1" fill="none" opacity="0.8"/>
<path d="M857.5,526.7L858.7,525.5L858.7,531.5" fill="none" stroke="#ffffff" stroke-width="1" stroke-linejoin="round"/>
<text x="870.5" y="529.5" font-family="Liberation Sans" font-size="7" fill="#ffffff" text-anchor="start" textLength="19.5" lengthAdjust="spacingAndGlyphs" stroke="#fff" stroke-width="0.3">HT200</text>
<path d="M797.5,535.7L798.7,534.5L798.7,540.5M801.5,535.7L802.3,534.5L804.7,534.5L805.5,535.7L805.5,536.9L801.5,540.5L805.5,540.5" fill="none" stroke="#ffffff" stroke-width="1" stroke-linejoin="round"/>
<path d="M817,537.5H821.4M819,539.5H820.4M819,535.5H822.4M817,534.5H821.4M818.5,533V538.5M820.5,534V539.5M817.5,533V538.5" stroke="#fff" stroke-width="1" fill="none" opacity="0.8"/>
<path d="M823,537.5H828.4M823,534.5H827.4M823,535.5H826.4M823,538.5H828.4M823.5,533V539.5M825.5,534V539.5M828.5,533V539.5" stroke="#fff" stroke-width="1" fill="none" opacity="0.8"/>
<path d="M829,533.5H834.4M830,538.5H834.4M830,534.5H832.4M829,536.5H833.4M834.5,533V539.5M829.5,533V538.5M830.5,533V538.5" stroke="#fff" stroke-width="1" fill="none" opacity="0.8"/>
<path d="M837,537.5H838.4M835,533.5H838.4M836,534.5H838.4M835,539.5H839.4M837.5,535V538.5M840.5,534V539.5M839.5,534V539.5" stroke="#fff" stroke-width="1" fill="none" opacity="0.8"/>
<path d="M859.5,540.5L859.5,534.5L856.5,538.7L860.5,538.7" fill="none" stroke="#ffffff" stroke-width="1" stroke-linejoin="round"/>
<path d="M797.5,545.7L798.7,544.5L798.7,550.5M802.5,545.7L803.7,544.5L803.7,550.5" fill="none" stroke="#ffffff" stroke-width="1" stroke-linejoin="round"/>
<path d="M821,544.5H825.4M821,548.5H826.4M822,547.5H826.4M821,545.5H825.4M822.5,543V549.5M823.5,544V548.5M824.5,544V548.5" stroke="#fff" stroke-width="1" fill="none" opacity="0.8"/>
<path d="M827,546.5H832.4M827,543.5H832.4M827,549.5H830.4M827,548.5H832.4M830.5,545V549.5M829.5,545V549.5M827.5,545V549.5" stroke="#fff" stroke-width="1" fill="none" opacity="0.8"/>
<path d="M835,545.5H837.4M835,543.5H837.4M833,548.5H838.4M833,544.5H836.4M835.5,545V549.5M833.5,543V549.5M838.5,544V548.5" stroke="#fff" stroke-width="1" fill="none" opacity="0.8"/>
<path d="M857.5,545.7L858.7,544.5L858.7,550.5" fill="none" stroke="#ffffff" stroke-width="1" stroke-linejoin="round"/>
<text x="870.5" y="548.5" font-family="Liberation Sans" font-size="7" fill="#ffffff" text-anchor="start" textLength="13.5" lengthAdjust="spacingAndGlyphs" stroke="#fff" stroke-width="0.3">T10A</text>
<text x="905.5" y="548.5" font-family="Liberation Sans" font-size="7" fill="#ffffff" text-anchor="start" textLength="33" lengthAdjust="spacingAndGlyphs" stroke="#fff" stroke-width="0.3">50–55HRC</text>
<path d="M797.5,554.7L798.7,553.5L798.7,559.5M801.5,554.4L802.3,553.5L804.7,553.5L805.5,554.4L805.5,558.6L804.7,559.5L802.3,559.5L801.5,558.6L801.5,554.4" fill="none" stroke="#ffffff" stroke-width="1" stroke-linejoin="round"/>
<text x="811.5" y="557.5" font-family="Liberation Sans" font-size="6.5" fill="#ffffff" text-anchor="start" textLength="10" lengthAdjust="spacingAndGlyphs">M12</text>
<path d="M822,553.5H827.2M822,555.5H825.2M823,557.5H827.2M822,556.5H825.2M827.5,554V558M826.5,554V558M822.5,552V558" stroke="#fff" stroke-width="1" fill="none" opacity="0.8"/>
<path d="M828,552.5H831.2M828,558.5H831.2M828,554.5H833.2M829,556.5H833.2M831.5,553V558M828.5,554V558M830.5,554V557" stroke="#fff" stroke-width="1" fill="none" opacity="0.8"/>
<path d="M834,552.5H839.2M834,553.5H838.2M836,558.5H837.2M835,555.5H837.2M839.5,554V558M834.5,553V558M838.5,553V558" stroke="#fff" stroke-width="1" fill="none" opacity="0.8"/>
<path d="M842,555.5H845.2M842,552.5H845.2M840,557.5H844.2M841,553.5H843.2M844.5,554V557M845.5,552V558M843.5,554V557" stroke="#fff" stroke-width="1" fill="none" opacity="0.8"/>
<path d="M846,554.5H850.2M847,557.5H851.2M848,553.5H849.2M846,558.5H850.2M850.5,553V557M848.5,554V558M849.5,552V557" stroke="#fff" stroke-width="1" fill="none" opacity="0.8"/>
<path d="M859.5,559.5L859.5,553.5L856.5,557.7L860.5,557.7" fill="none" stroke="#ffffff" stroke-width="1" stroke-linejoin="round"/>
<text x="873" y="557.5" font-family="Liberation Sans" font-size="7" fill="#ffffff" text-anchor="start" textLength="10.5" lengthAdjust="spacingAndGlyphs" stroke="#fff" stroke-width="0.3">45#</text>
<text x="905.5" y="557.5" font-family="Liberation Sans" font-size="7" fill="#ffffff" text-anchor="start" textLength="33" lengthAdjust="spacingAndGlyphs" stroke="#fff" stroke-width="0.3">43–48HRC</text>
<text x="974" y="557.5" font-family="Liberation Sans" font-size="7" fill="#ffffff" text-anchor="middle" textLength="28" lengthAdjust="spacingAndGlyphs" stroke="#fff" stroke-width="0.3">GB70–85</text>
<path d="M799.9,569.2L800.5,569.5L802.5,569.5L803.5,568.3L803.5,564.4L802.7,563.5L800.3,563.5L799.5,564.4L799.5,565.9L800.3,566.8L803.5,566.8" fill="none" stroke="#ffffff" stroke-width="1" stroke-linejoin="round"/>
<path d="M821,563.5H827.2M821,568.5H827.2M821,564.5H826.2M821,567.5H826.2M822.5,563V567.5M821.5,562V567.5M824.5,562V568.5" stroke="#fff" stroke-width="1" fill="none" opacity="0.8"/>
<path d="M833,565.5H837.2M834,564.5H839.2M835,563.5H839.2M833,567.5H837.2M837.5,563V568.5M838.5,563V567.5M833.5,562V568.5" stroke="#fff" stroke-width="1" fill="none" opacity="0.8"/>
<path d="M859.5,569.5L859.5,563.5L856.5,567.7L860.5,567.7" fill="none" stroke="#ffffff" stroke-width="1" stroke-linejoin="round"/>
<text x="870.5" y="567.5" font-family="Liberation Sans" font-size="7" fill="#ffffff" text-anchor="start" textLength="11.5" lengthAdjust="spacingAndGlyphs" stroke="#fff" stroke-width="0.3">T8A</text>
<text x="905.5" y="567.5" font-family="Liberation Sans" font-size="7" fill="#ffffff" text-anchor="start" textLength="33" lengthAdjust="spacingAndGlyphs" stroke="#fff" stroke-width="0.3">50–55HRC</text>
<text x="974" y="567.5" font-family="Liberation Sans" font-size="7" fill="#ffffff" text-anchor="middle" textLength="42" lengthAdjust="spacingAndGlyphs" stroke="#fff" stroke-width="0.3">GB4169.4–84</text>
<path d="M800.3,573.5L802.7,573.5L803.5,574.2L803.5,575.6L802.7,576.3L800.3,576.3L799.5,575.6L799.5,574.2L800.3,573.5M800.3,576.3L799.5,577.1L799.5,578.6L800.3,579.5L802.7,579.5L803.5,578.6L803.5,577.1L802.7,576.3" fill="none" stroke="#ffffff" stroke-width="1" stroke-linejoin="round"/>
<path d="M821,573.5H825.2M823,577.5H827.2M821,575.5H826.2M822,576.5H827.2M822.5,573V578.5M824.5,572V577.5M826.5,574V578.5" stroke="#fff" stroke-width="1" fill="none" opacity="0.8"/>
<path d="M834,573.5H837.2M835,576.5H838.2M834,572.5H839.2M835,578.5H837.2M836.5,574V578.5M833.5,573V578.5M834.5,573V578.5" stroke="#fff" stroke-width="1" fill="none" opacity="0.8"/>
<path d="M856.5,574.7L857.3,573.5L859.7,573.5L860.5,574.7L860.5,575.9L856.5,579.5L860.5,579.5" fill="none" stroke="#ffffff" stroke-width="1" stroke-linejoin="round"/>
<path d="M799.5,582.5L803.5,582.5L800.9,588.5" fill="none" stroke="#ffffff" stroke-width="1" stroke-linejoin="round"/>
<path d="M821,585.5H825.2M822,582.5H827.2M821,584.5H825.2M821,581.5H827.2M822.5,581V587.5M823.5,582V587.5M825.5,581V587.5" stroke="#fff" stroke-width="1" fill="none" opacity="0.8"/>
<path d="M834,583.5H839.2M833,587.5H839.2M834,584.5H838.2M833,586.5H839.2M837.5,583V587.5M835.5,581V587.5M838.5,583V587.5" stroke="#fff" stroke-width="1" fill="none" opacity="0.8"/>
<path d="M856.5,583.7L857.3,582.5L859.7,582.5L860.5,583.7L860.5,584.9L856.5,588.5L860.5,588.5" fill="none" stroke="#ffffff" stroke-width="1" stroke-linejoin="round"/>
<path d="M803.1,592.8L802.5,592.5L800.5,592.5L799.5,593.7L799.5,597.6L800.3,598.5L802.7,598.5L803.5,597.6L803.5,596.1L802.7,595.2L799.5,595.2" fill="none" stroke="#ffffff" stroke-width="1" stroke-linejoin="round"/>
<path d="M821,593.5H827.2M821,591.5H827.2M823,597.5H827.2M822,592.5H826.2M821.5,591V596.5M822.5,591V597.5M823.5,591V597.5" stroke="#fff" stroke-width="1" fill="none" opacity="0.8"/>
<path d="M835,595.5H838.2M833,596.5H838.2M835,594.5H837.2M835,592.5H839.2M836.5,593V597.5M838.5,591V596.5M834.5,591V596.5" stroke="#fff" stroke-width="1" fill="none" opacity="0.8"/>
<path d="M856.5,593.7L857.3,592.5L859.7,592.5L860.5,593.7L860.5,594.9L856.5,598.5L860.5,598.5" fill="none" stroke="#ffffff" stroke-width="1" stroke-linejoin="round"/>
<path d="M803.5,601.5L799.5,601.5L799.5,604.2L802.5,604.2L803.5,605.1L803.5,606.6L802.7,607.5L800.3,607.5L799.5,606.6" fill="none" stroke="#ffffff" stroke-width="1" stroke-linejoin="round"/>
<path d="M822,606.5H825.2M822,604.5H826.2M821,603.5H827.2M821,600.5H827.2M826.5,601V606.5M821.5,600V606.5M825.5,600V606.5" stroke="#fff" stroke-width="1" fill="none" opacity="0.8"/>
<path d="M833,605.5H838.2M835,602.5H839.2M834,603.5H838.2M835,604.5H838.2M834.5,601V605.5M833.5,600V606.5M836.5,600V606.5" stroke="#fff" stroke-width="1" fill="none" opacity="0.8"/>
<path d="M857.3,601.5L859.7,601.5L860.5,602.2L860.5,603.6L859.7,604.3L857.3,604.3L856.5,603.6L856.5,602.2L857.3,601.5M857.3,604.3L856.5,605.1L856.5,606.6L857.3,607.5L859.7,607.5L860.5,606.6L860.5,605.1L859.7,604.3" fill="none" stroke="#ffffff" stroke-width="1" stroke-linejoin="round"/>
<text x="870.5" y="605.5" font-family="Liberation Sans" font-size="7" fill="#ffffff" text-anchor="start" textLength="11.5" lengthAdjust="spacingAndGlyphs" stroke="#fff" stroke-width="0.3">T8A</text>
<text x="905.5" y="605.5" font-family="Liberation Sans" font-size="7" fill="#ffffff" text-anchor="start" textLength="33" lengthAdjust="spacingAndGlyphs" stroke="#fff" stroke-width="0.3">38–42HRC</text>
<path d="M802.5,617.5L802.5,611.5L799.5,615.7L803.5,615.7" fill="none" stroke="#ffffff" stroke-width="1" stroke-linejoin="round"/>
<path d="M815,612.5H820.3M815,614.5H820.3M817,611.5H818.3M816,610.5H819.3M818.5,612V616.5M820.5,612V616.5M817.5,610V616.5" stroke="#fff" stroke-width="1" fill="none" opacity="0.8"/>
<path d="M823,611.5H826.3M821,610.5H826.3M821,612.5H826.3M821,613.5H826.3M821.5,610V616.5M825.5,612V616.5M823.5,611V615.5" stroke="#fff" stroke-width="1" fill="none" opacity="0.8"/>
<path d="M828,615.5H830.3M827,613.5H832.3M828,616.5H830.3M829,610.5H832.3M828.5,612V616.5M832.5,612V616.5M830.5,611V616.5" stroke="#fff" stroke-width="1" fill="none" opacity="0.8"/>
<path d="M835,612.5H838.3M833,616.5H838.3M835,610.5H838.3M833,611.5H838.3M835.5,610V616.5M833.5,611V616.5M836.5,611V616.5" stroke="#fff" stroke-width="1" fill="none" opacity="0.8"/>
<path d="M840,610.5H844.3M841,612.5H844.3M839,611.5H844.3M839,613.5H843.3M844.5,612V616.5M842.5,612V616.5M841.5,611V615.5" stroke="#fff" stroke-width="1" fill="none" opacity="0.8"/>
<path d="M857.5,612.7L858.7,611.5L858.7,617.5" fill="none" stroke="#ffffff" stroke-width="1" stroke-linejoin="round"/>
<text x="873" y="615.5" font-family="Liberation Sans" font-size="7" fill="#ffffff" text-anchor="start" textLength="10.5" lengthAdjust="spacingAndGlyphs" stroke="#fff" stroke-width="0.3">45#</text>
<text x="905.5" y="615.5" font-family="Liberation Sans" font-size="7" fill="#ffffff" text-anchor="start" textLength="33" lengthAdjust="spacingAndGlyphs" stroke="#fff" stroke-width="0.3">43–48HRC</text>
<text x="974" y="615.5" font-family="Liberation Sans" font-size="7" fill="#ffffff" text-anchor="middle" textLength="57" lengthAdjust="spacingAndGlyphs" stroke="#fff" stroke-width="0.3">GB/T4169.7–1984</text>
<path d="M799.5,622.4L800.3,621.5L802.7,621.5L803.5,622.4L803.5,623.6L802.7,624.4L801.1,624.4M802.7,624.4L803.5,625.2L803.5,626.6L802.7,627.5L800.3,627.5L799.5,626.6" fill="none" stroke="#ffffff" stroke-width="1" stroke-linejoin="round"/>
<path d="M821,624.5H827.2M823,620.5H825.2M823,625.5H827.2M821,622.5H827.2M826.5,621V626.5M821.5,620V625.5M824.5,620V626.5" stroke="#fff" stroke-width="1" fill="none" opacity="0.8"/>
<path d="M833,622.5H839.2M835,620.5H838.2M834,625.5H838.2M834,621.5H839.2M834.5,620V625.5M838.5,620V626.5M837.5,622V626.5" stroke="#fff" stroke-width="1" fill="none" opacity="0.8"/>
<path d="M857.5,622.7L858.7,621.5L858.7,627.5" fill="none" stroke="#ffffff" stroke-width="1" stroke-linejoin="round"/>
<text x="873" y="625.5" font-family="Liberation Sans" font-size="7" fill="#ffffff" text-anchor="start" textLength="10.5" lengthAdjust="spacingAndGlyphs" stroke="#fff" stroke-width="0.3">45#</text>
<text x="905.5" y="625.5" font-family="Liberation Sans" font-size="7" fill="#ffffff" text-anchor="start" textLength="33" lengthAdjust="spacingAndGlyphs" stroke="#fff" stroke-width="0.3">43–48HRC</text>
<text x="974" y="625.5" font-family="Liberation Sans" font-size="7" fill="#ffffff" text-anchor="middle" textLength="57" lengthAdjust="spacingAndGlyphs" stroke="#fff" stroke-width="0.3">GB/T4169.7–1984</text>
<path d="M799.5,631.7L800.3,630.5L802.7,630.5L803.5,631.7L803.5,632.9L799.5,636.5L803.5,636.5" fill="none" stroke="#ffffff" stroke-width="1" stroke-linejoin="round"/>
<path d="M816,629.5H819.3M815,635.5H820.3M817,630.5H820.3M817,632.5H820.3M819.5,629V635.5M817.5,629V634.5M820.5,629V635.5" stroke="#fff" stroke-width="1" fill="none" opacity="0.8"/>
<path d="M821,630.5H826.3M821,633.5H824.3M821,632.5H825.3M822,634.5H826.3M826.5,629V635.5M821.5,629V635.5M823.5,630V635.5" stroke="#fff" stroke-width="1" fill="none" opacity="0.8"/>
<path d="M827,633.5H830.3M828,634.5H831.3M827,630.5H832.3M827,629.5H832.3M830.5,629V635.5M829.5,630V634.5M831.5,629V634.5" stroke="#fff" stroke-width="1" fill="none" opacity="0.8"/>
<path d="M833,632.5H836.3M833,630.5H836.3M833,633.5H838.3M834,635.5H837.3M834.5,630V634.5M835.5,629V635.5M838.5,630V635.5" stroke="#fff" stroke-width="1" fill="none" opacity="0.8"/>
<path d="M839,629.5H842.3M841,633.5H842.3M841,635.5H843.3M840,631.5H844.3M842.5,630V635.5M840.5,629V634.5M841.5,630V635.5" stroke="#fff" stroke-width="1" fill="none" opacity="0.8"/>
<path d="M859.5,636.5L859.5,630.5L856.5,634.7L860.5,634.7" fill="none" stroke="#ffffff" stroke-width="1" stroke-linejoin="round"/>
<text x="873" y="634.5" font-family="Liberation Sans" font-size="7" fill="#ffffff" text-anchor="start" textLength="10.5" lengthAdjust="spacingAndGlyphs" stroke="#fff" stroke-width="0.3">45#</text>
<text x="905.5" y="634.5" font-family="Liberation Sans" font-size="7" fill="#ffffff" text-anchor="start" textLength="33" lengthAdjust="spacingAndGlyphs" stroke="#fff" stroke-width="0.3">43–48HRC</text>
<text x="974" y="634.5" font-family="Liberation Sans" font-size="7" fill="#ffffff" text-anchor="middle" textLength="28" lengthAdjust="spacingAndGlyphs" stroke="#fff" stroke-width="0.3">GB70–85</text>
<path d="M800.5,641.7L801.7,640.5L801.7,646.5" fill="none" stroke="#ffffff" stroke-width="1" stroke-linejoin="round"/>
<path d="M817,643.5H821.4M817,645.5H822.4M818,639.5H822.4M819,641.5H820.4M818.5,639V645.5M819.5,640V645.5M817.5,639V645.5" stroke="#fff" stroke-width="1" fill="none" opacity="0.8"/>
<path d="M823,640.5H826.4M823,645.5H828.4M823,643.5H827.4M823,642.5H826.4M828.5,639V645.5M823.5,639V645.5M827.5,639V644.5" stroke="#fff" stroke-width="1" fill="none" opacity="0.8"/>
<path d="M829,644.5H833.4M829,642.5H834.4M829,645.5H832.4M830,640.5H833.4M830.5,639V644.5M832.5,639V645.5M833.5,640V645.5" stroke="#fff" stroke-width="1" fill="none" opacity="0.8"/>
<path d="M835,639.5H838.4M835,640.5H840.4M835,641.5H839.4M836,645.5H840.4M835.5,639V644.5M837.5,641V644.5M836.5,641V644.5" stroke="#fff" stroke-width="1" fill="none" opacity="0.8"/>
<path d="M857.5,641.7L858.7,640.5L858.7,646.5" fill="none" stroke="#ffffff" stroke-width="1" stroke-linejoin="round"/>
<text x="870.5" y="644.5" font-family="Liberation Sans" font-size="7" fill="#ffffff" text-anchor="start" textLength="19.5" lengthAdjust="spacingAndGlyphs" stroke="#fff" stroke-width="0.3">HT200</text>
<path d="M795,650h3v4.5h-3Z" fill="#fff" opacity="0.9"/>
<path d="M797,650h1v1h-1ZM796,650h1v1h-1ZM795,652h1v1h-1Z" fill="#000"/>
<path d="M798,650h3v4.5h-3Z" fill="#fff" opacity="0.9"/>
<path d="M799,652h1v1h-1ZM799,653h1v1h-1ZM799,652h1v1h-1Z" fill="#000"/>
<path d="M820,650h3v4.5h-3Z" fill="#fff" opacity="0.9"/>
<path d="M821,651h1v1h-1ZM822,653h1v1h-1ZM822,653h1v1h-1Z" fill="#000"/>
<path d="M841,650h3v4.5h-3Z" fill="#fff" opacity="0.9"/>
<path d="M841,650h1v1h-1ZM843,652h1v1h-1ZM842,651h1v1h-1Z" fill="#000"/>
<path d="M854,650h3v4.5h-3Z" fill="#fff" opacity="0.9"/>
<path d="M855,650h1v1h-1ZM854,650h1v1h-1ZM854,653h1v1h-1Z" fill="#000"/>
<path d="M858,650h3v4.5h-3Z" fill="#fff" opacity="0.9"/>
<path d="M860,651h1v1h-1ZM860,650h1v1h-1ZM858,650h1v1h-1Z" fill="#000"/>
<path d="M873,650h3v4.5h-3Z" fill="#fff" opacity="0.9"/>
<path d="M875,650h1v1h-1ZM875,651h1v1h-1ZM875,652h1v1h-1Z" fill="#000"/>
<path d="M889,650h3v4.5h-3Z" fill="#fff" opacity="0.9"/>
<path d="M889,650h1v1h-1ZM889,652h1v1h-1ZM890,652h1v1h-1Z" fill="#000"/>
<path d="M906,650h3v4.5h-3Z" fill="#fff" opacity="0.9"/>
<path d="M908,652h1v1h-1ZM907,653h1v1h-1ZM907,651h1v1h-1Z" fill="#000"/>
<path d="M918,650h3v4.5h-3Z" fill="#fff" opacity="0.9"/>
<path d="M920,652h1v1h-1ZM919,651h1v1h-1ZM920,650h1v1h-1Z" fill="#000"/>
<path d="M930,650h3v4.5h-3Z" fill="#fff" opacity="0.9"/>
<path d="M931,651h1v1h-1ZM931,650h1v1h-1ZM932,653h1v1h-1Z" fill="#000"/>
<path d="M963,650h3v4.5h-3Z" fill="#fff" opacity="0.9"/>
<path d="M964,652h1v1h-1ZM964,651h1v1h-1ZM963,650h1v1h-1Z" fill="#000"/>
<path d="M988,650h3v4.5h-3Z" fill="#fff" opacity="0.9"/>
<path d="M988,653h1v1h-1ZM988,650h1v1h-1ZM988,653h1v1h-1Z" fill="#000"/>
<rect x="792.5" y="657.5" width="216" height="67" fill="none" stroke="#ffffff" stroke-width="1"/>
<line x1="792.5" y1="666.5" x2="888.5" y2="666.5" stroke="#ffffff" stroke-width="1"/>
<line x1="792.5" y1="674.5" x2="888.5" y2="674.5" stroke="#ffffff" stroke-width="1"/>
<line x1="792.5" y1="682.5" x2="888.5" y2="682.5" stroke="#ffffff" stroke-width="1"/>
<line x1="792.5" y1="690.5" x2="888.5" y2="690.5" stroke="#ffffff" stroke-width="1"/>
<line x1="805.5" y1="657.5" x2="805.5" y2="690.5" stroke="#ffffff" stroke-width="1"/>
<line x1="816.5" y1="657.5" x2="816.5" y2="690.5" stroke="#ffffff" stroke-width="1"/>
<line x1="835.5" y1="657.5" x2="835.5" y2="690.5" stroke="#ffffff" stroke-width="1"/>
<line x1="854.5" y1="657.5" x2="854.5" y2="690.5" stroke="#ffffff" stroke-width="1"/>
<line x1="869.5" y1="657.5" x2="869.5" y2="690.5" stroke="#ffffff" stroke-width="1"/>
<line x1="888.5" y1="657.5" x2="888.5" y2="724.5" stroke="#ffffff" stroke-width="1"/>
<line x1="792.5" y1="699.5" x2="888.5" y2="699.5" stroke="#ffffff" stroke-width="1"/>
<line x1="792.5" y1="707.5" x2="888.5" y2="707.5" stroke="#ffffff" stroke-width="1"/>
<line x1="792.5" y1="716.5" x2="888.5" y2="716.5" stroke="#ffffff" stroke-width="1"/>
<line x1="806.5" y1="690.5" x2="806.5" y2="724.5" stroke="#ffffff" stroke-width="1"/>
<line x1="820.5" y1="690.5" x2="820.5" y2="724.5" stroke="#ffffff" stroke-width="1"/>
<line x1="840.5" y1="690.5" x2="840.5" y2="724.5" stroke="#ffffff" stroke-width="1"/>
<line x1="854.5" y1="690.5" x2="854.5" y2="724.5" stroke="#ffffff" stroke-width="1"/>
<line x1="869.5" y1="690.5" x2="869.5" y2="724.5" stroke="#ffffff" stroke-width="1"/>
<line x1="888.5" y1="690.5" x2="948.5" y2="690.5" stroke="#ffffff" stroke-width="1"/>
<line x1="888.5" y1="702.5" x2="948.5" y2="702.5" stroke="#ffffff" stroke-width="1"/>
<line x1="888.5" y1="713.5" x2="948.5" y2="713.5" stroke="#ffffff" stroke-width="1"/>
<line x1="948.5" y1="657.5" x2="948.5" y2="724.5" stroke="#ffffff" stroke-width="1"/>
<line x1="919.5" y1="690.5" x2="919.5" y2="713.5" stroke="#ffffff" stroke-width="1"/>
<line x1="933.5" y1="690.5" x2="933.5" y2="713.5" stroke="#ffffff" stroke-width="1"/>
<line x1="896.5" y1="702.5" x2="896.5" y2="713.5" stroke="#ffffff" stroke-width="1"/>
<line x1="904.5" y1="702.5" x2="904.5" y2="713.5" stroke="#ffffff" stroke-width="1"/>
<line x1="911.5" y1="702.5" x2="911.5" y2="713.5" stroke="#ffffff" stroke-width="1"/>
<line x1="948.5" y1="677.5" x2="1008.5" y2="677.5" stroke="#ffffff" stroke-width="1"/>
<line x1="948.5" y1="702.5" x2="1008.5" y2="702.5" stroke="#ffffff" stroke-width="1"/>
<path d="M965,665.5H967.6M966,664.5H968.6M964,666.5H968.6M966,667.5H967.6M966.5,664V672M964.5,665V672M967.5,664V672" stroke="#fff" stroke-width="1" fill="none" opacity="0.8"/>
<path d="M971,664.5H975.6M972,668.5H974.6M971,670.5H973.6M970,669.5H975.6M970.5,665V671M972.5,665V672M974.5,664V672" stroke="#fff" stroke-width="1" fill="none" opacity="0.8"/>
<path d="M976,667.5H980.6M976,665.5H979.6M976,669.5H979.6M978,670.5H980.6M978.5,664V672M977.5,666V672M976.5,665V671" stroke="#fff" stroke-width="1" fill="none" opacity="0.8"/>
<path d="M982,664.5H985.6M982,667.5H987.6M982,669.5H985.6M983,665.5H986.6M984.5,664V671M983.5,664V672M985.5,664V672" stroke="#fff" stroke-width="1" fill="none" opacity="0.8"/>
<path d="M989,666.5H993.6M988,664.5H991.6M990,669.5H992.6M988,670.5H993.6M991.5,664V672M990.5,666V672M992.5,664V671" stroke="#fff" stroke-width="1" fill="none" opacity="0.8"/>
<path d="M967,665.5H968.6M965,669.5H970.6M967,666.5H970.6M967,667.5H970.6M967.5,666V671M965.5,664V672M966.5,664V671" stroke="#fff" stroke-width="1" fill="none" opacity="0.8"/>
<path d="M973,665.5H976.6M971,664.5H976.6M971,669.5H976.6M971,666.5H975.6M976.5,664V672M974.5,665V672M972.5,664V672" stroke="#fff" stroke-width="1" fill="none" opacity="0.8"/>
<path d="M977,666.5H981.6M978,665.5H981.6M977,669.5H982.6M979,664.5H982.6M982.5,666V672M981.5,665V672M977.5,666V671" stroke="#fff" stroke-width="1" fill="none" opacity="0.8"/>
<path d="M985,664.5H987.6M983,670.5H988.6M983,669.5H988.6M984,666.5H987.6M987.5,664V671M983.5,666V672M986.5,664V671" stroke="#fff" stroke-width="1" fill="none" opacity="0.8"/>
<path d="M989,665.5H993.6M989,668.5H993.6M989,670.5H993.6M989,664.5H994.6M991.5,664V672M992.5,665V672M993.5,665V671" stroke="#fff" stroke-width="1" fill="none" opacity="0.8"/>
<path d="M794,692h3.5v4.5h-3.5Z" fill="#fff" opacity="0.9"/>
<path d="M796,695h1v1h-1ZM795,695h1v1h-1ZM794,694h1v1h-1Z" fill="#000"/>
<path d="M798,692h3.5v4.5h-3.5Z" fill="#fff" opacity="0.9"/>
<path d="M799,693h1v1h-1ZM799,692h1v1h-1ZM799,692h1v1h-1Z" fill="#000"/>
<path d="M809,692h3.3v4.5h-3.3Z" fill="#fff" opacity="0.9"/>
<path d="M809,692h1v1h-1ZM811,694h1v1h-1ZM810,694h1v1h-1Z" fill="#000"/>
<path d="M813,692h3.3v4.5h-3.3Z" fill="#fff" opacity="0.9"/>
<path d="M814,695h1v1h-1ZM813,692h1v1h-1ZM813,695h1v1h-1Z" fill="#000"/>
<path d="M816,692h3.3v4.5h-3.3Z" fill="#fff" opacity="0.9"/>
<path d="M816,692h1v1h-1ZM817,693h1v1h-1ZM818,695h1v1h-1Z" fill="#000"/>
<path d="M842,692h3v4.5h-3Z" fill="#fff" opacity="0.9"/>
<path d="M843,694h1v1h-1ZM844,694h1v1h-1ZM844,692h1v1h-1Z" fill="#000"/>
<path d="M845,692h3v4.5h-3Z" fill="#fff" opacity="0.9"/>
<path d="M845,692h1v1h-1ZM847,692h1v1h-1ZM847,694h1v1h-1Z" fill="#000"/>
<path d="M794,710h3.2v4.5h-3.2Z" fill="#fff" opacity="0.9"/>
<path d="M795,710h1v1h-1ZM795,712h1v1h-1ZM796,710h1v1h-1Z" fill="#000"/>
<path d="M798,710h3.2v4.5h-3.2Z" fill="#fff" opacity="0.9"/>
<path d="M800,711h1v1h-1ZM799,712h1v1h-1ZM798,711h1v1h-1Z" fill="#000"/>
<path d="M794,718h3.2v4.5h-3.2Z" fill="#fff" opacity="0.9"/>
<path d="M794,719h1v1h-1ZM795,719h1v1h-1ZM796,718h1v1h-1Z" fill="#000"/>
<path d="M798,718h3.2v4.5h-3.2Z" fill="#fff" opacity="0.9"/>
<path d="M799,721h1v1h-1ZM799,718h1v1h-1ZM800,720h1v1h-1Z" fill="#000"/>
<path d="M842,718h3.2v4.5h-3.2Z" fill="#fff" opacity="0.9"/>
<path d="M844,721h1v1h-1ZM844,721h1v1h-1ZM844,721h1v1h-1Z" fill="#000"/>
<path d="M845,718h3.2v4.5h-3.2Z" fill="#fff" opacity="0.9"/>
<path d="M847,718h1v1h-1ZM846,719h1v1h-1ZM845,718h1v1h-1Z" fill="#000"/>
<path d="M892,694h3v4.5h-3Z" fill="#fff" opacity="0.9"/>
<path d="M894,696h1v1h-1ZM892,697h1v1h-1ZM894,696h1v1h-1Z" fill="#000"/>
<path d="M896,694h3v4.5h-3Z" fill="#fff" opacity="0.9"/>
<path d="M898,695h1v1h-1ZM897,697h1v1h-1ZM898,695h1v1h-1Z" fill="#000"/>
<path d="M900,694h3v4.5h-3Z" fill="#fff" opacity="0.9"/>
<path d="M901,696h1v1h-1ZM900,695h1v1h-1ZM901,697h1v1h-1Z" fill="#000"/>
<path d="M904,694h3v4.5h-3Z" fill="#fff" opacity="0.9"/>
<path d="M905,695h1v1h-1ZM904,696h1v1h-1ZM905,696h1v1h-1Z" fill="#000"/>
<path d="M922,694h2.8v4.5h-2.8Z" fill="#fff" opacity="0.9"/>
<path d="M923,695h1v1h-1ZM923,695h1v1h-1ZM923,695h1v1h-1Z" fill="#000"/>
<path d="M926,694h2.8v4.5h-2.8Z" fill="#fff" opacity="0.9"/>
<path d="M927,696h1v1h-1ZM927,697h1v1h-1ZM927,694h1v1h-1Z" fill="#000"/>
<path d="M937,694h2.8v4.5h-2.8Z" fill="#fff" opacity="0.9"/>
<path d="M937,695h1v1h-1ZM938,697h1v1h-1ZM937,696h1v1h-1Z" fill="#000"/>
<path d="M940,694h2.8v4.5h-2.8Z" fill="#fff" opacity="0.9"/>
<path d="M941,697h1v1h-1ZM941,695h1v1h-1ZM941,695h1v1h-1Z" fill="#000"/>
<path d="M938,706h2.8v4.5h-2.8Z" fill="#fff" opacity="0.9"/>
<path d="M939,706h1v1h-1ZM939,709h1v1h-1ZM938,709h1v1h-1Z" fill="#000"/>
<path d="M941,706h2.8v4.5h-2.8Z" fill="#fff" opacity="0.9"/>
<path d="M942,708h1v1h-1ZM942,706h1v1h-1ZM941,709h1v1h-1Z" fill="#000"/>
<text x="624" y="455.8" font-family="Liberation Sans" font-size="8.5" fill="#ffffff" text-anchor="start" textLength="3" lengthAdjust="spacingAndGlyphs" stroke="#fff" stroke-width="0.3">1</text>
<text x="624" y="465.1" font-family="Liberation Sans" font-size="8.5" fill="#ffffff" text-anchor="start" textLength="3" lengthAdjust="spacingAndGlyphs" stroke="#fff" stroke-width="0.3">2</text>
<text x="624" y="474.4" font-family="Liberation Sans" font-size="8.5" fill="#ffffff" text-anchor="start" textLength="9" lengthAdjust="spacingAndGlyphs" stroke="#fff" stroke-width="0.3">3#</text>
<text x="624" y="483.7" font-family="Liberation Sans" font-size="8.5" fill="#ffffff" text-anchor="start" textLength="29" lengthAdjust="spacingAndGlyphs" stroke="#fff" stroke-width="0.3">4GB11B4B</text>
<text x="624" y="493" font-family="Liberation Sans" font-size="8.5" fill="#ffffff" text-anchor="start" textLength="3" lengthAdjust="spacingAndGlyphs" stroke="#fff" stroke-width="0.3">5</text>
</svg>
<div id="tb"><div class="bar"></div>
<div class="cb" style="left:-2px;width:60px"></div>
<div class="ar" style="left:47.5px"></div>
<div class="sep" style="left:61px"></div>
<svg style="position:absolute;left:68px;top:0" width="17" height="13" shape-rendering="crispEdges"><rect x="1" y="0" width="14" height="12" fill="#4f76b4"/><rect x="1" y="0" width="14" height="2" fill="#6c9cf0"/><path d="M2,2h3v2h-3zM6,2h3v2h-3zM10,2h3v2h-3zM2,5h3v2h-3zM6,5h3v2h-3zM10,5h3v2h-3zM2,8h3v2h-3zM6,8h3v2h-3zM10,8h3v2h-3z" fill="#e8f0ff"/><path d="M4,7 L6,4 L9,2.5 L10.5,3.5 L9,6 Z" fill="#111" shape-rendering="auto"/><path d="M9.5,3.5 L13.5,-0.5" stroke="#2a5a5a" stroke-width="1.6" shape-rendering="auto"/><path d="M12.5,1 L14.5,-1" stroke="#c06010" stroke-width="1.8" shape-rendering="auto"/></svg>
<div class="cb" style="left:89px;width:100px"></div>
<div class="ar" style="left:176px"></div>
<div class="sep" style="left:192px;height:15px"></div><div class="sep" style="left:199px"></div><div class="sep" style="left:203px"></div>
<div class="cb" style="left:207px;width:148px"></div>
<div class="ar" style="left:344px"></div>
<div class="chk" style="left:213px"></div>
<div class="t" style="left:227px;top:-3px">ByLayer</div>
<div class="sep" style="left:358px"></div>
<div class="cb" style="left:363px;width:158px"></div>
<div class="ar" style="left:510.5px"></div>
<div style="position:absolute;left:368px;top:4px;width:60px;height:1px;background:#000"></div>
<div class="t" style="left:433px;top:-3px">ByLayer</div>
<div class="sep" style="left:524px"></div>
<div class="cb" style="left:528px;width:125px"></div>
<div class="ar" style="left:641.5px"></div>
<div style="position:absolute;left:534px;top:2px;width:35px;height:4px;background:#000"></div>
<div class="t" style="left:574px;top:-3px">ByLayer</div>
<div class="sep" style="left:656px"></div>
<div class="cb" style="left:660px;width:119px"></div>
<div class="ar" style="left:767.5px"></div>
<div class="t" style="left:669.5px;top:-4px">ByLayer</div>
</div>
</body></html>
